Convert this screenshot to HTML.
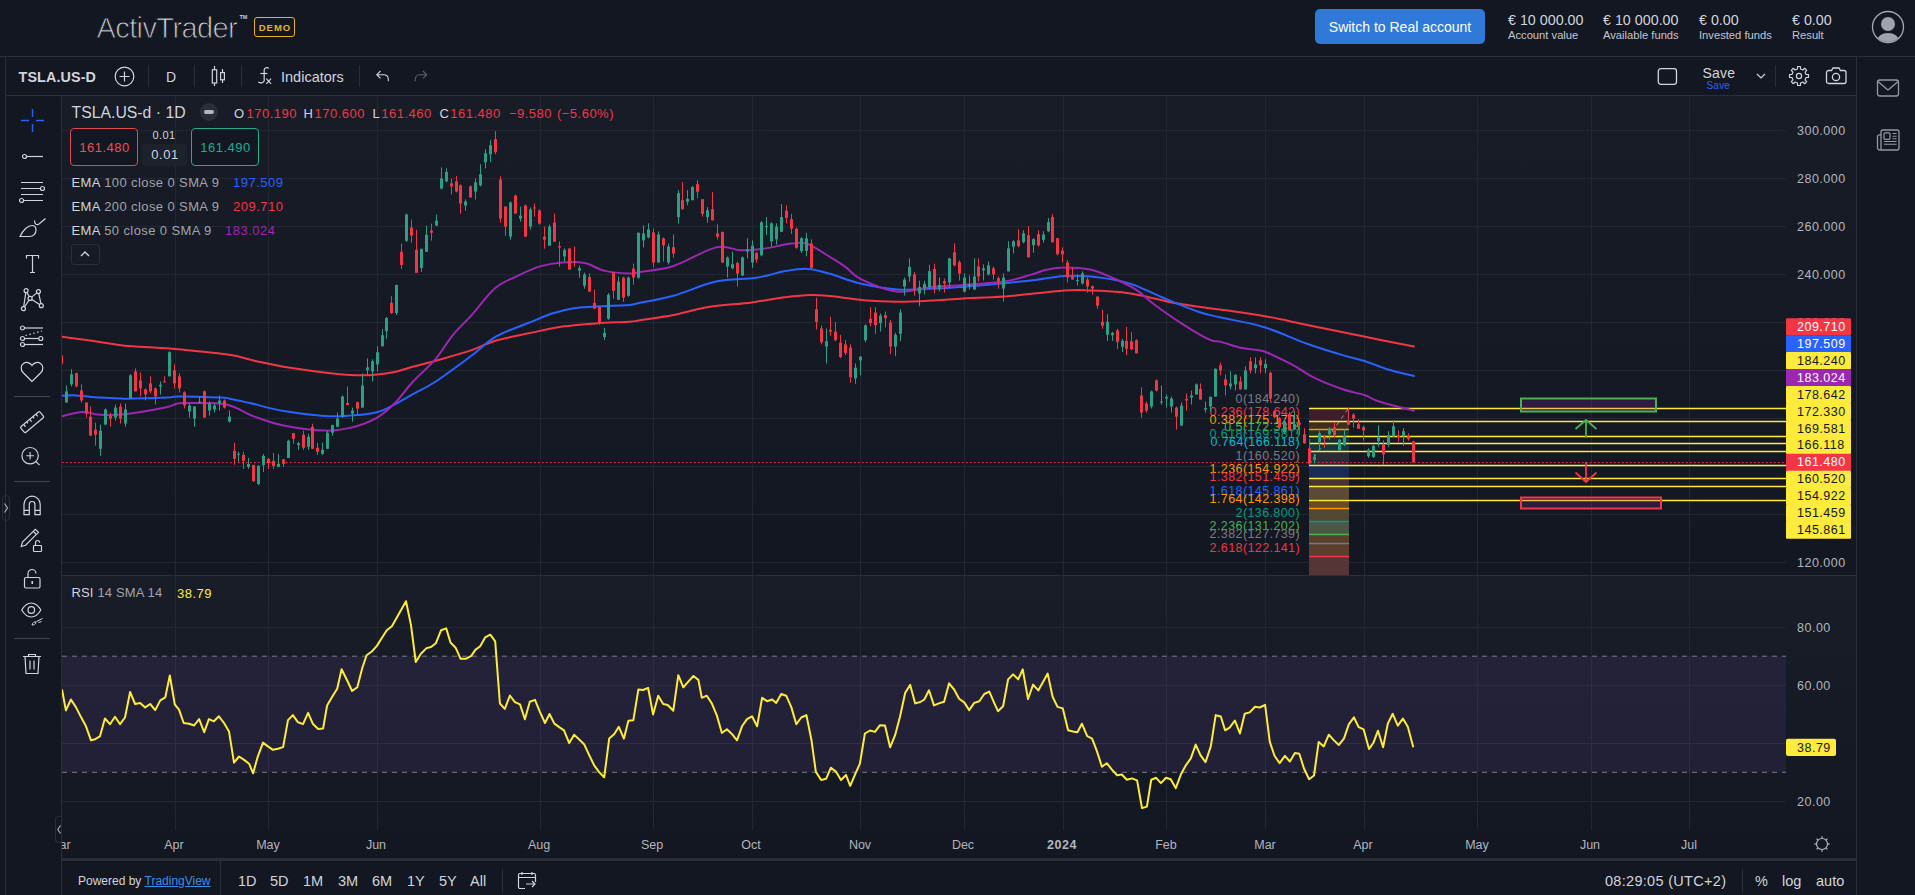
<!DOCTYPE html><html><head><meta charset="utf-8"><style>
html,body{margin:0;padding:0;width:1915px;height:895px;overflow:hidden;background:#131722;font-family:"Liberation Sans", sans-serif;}
div{box-sizing:border-box}
</style></head><body>
<div style="position:absolute;left:0;top:0;width:1915px;height:895px;overflow:hidden">
<div style="position:absolute;left:0;top:56px;width:1915px;height:1px;background:#2a2e39"></div>
<div style="position:absolute;left:5px;top:57px;width:1px;height:838px;background:#2a2e39"></div>
<div style="position:absolute;left:6px;top:95px;width:1850px;height:1px;background:#2a2e39"></div>
<div style="position:absolute;left:6px;top:96px;width:55px;height:799px;background:#131722"></div>
<div style="position:absolute;left:61px;top:96px;width:1px;height:799px;background:#2a2e39"></div>
<svg width="1915" height="895" style="position:absolute;left:0;top:0">
<defs><clipPath id="cm"><rect x="62" y="96" width="1724" height="479"/></clipPath><clipPath id="cr"><rect x="62" y="576" width="1724" height="254"/></clipPath><clipPath id="ct"><rect x="62" y="830" width="1794" height="28"/></clipPath><linearGradient id="g1" x1="0" y1="0" x2="0" y2="1"><stop offset="0" stop-color="#181c27"/><stop offset="1" stop-color="#131722"/></linearGradient><linearGradient id="g2" x1="0" y1="0" x2="0" y2="1"><stop offset="0" stop-color="#191d28"/><stop offset="1" stop-color="#131722"/></linearGradient></defs>
<rect x="62" y="96" width="1794" height="479" fill="url(#g1)"/>
<rect x="62" y="576" width="1794" height="282" fill="url(#g2)"/>
<line x1="175.5" y1="96" x2="175.5" y2="830" stroke="#232733" stroke-width="1"/>
<line x1="268.5" y1="96" x2="268.5" y2="830" stroke="#232733" stroke-width="1"/>
<line x1="377.5" y1="96" x2="377.5" y2="830" stroke="#232733" stroke-width="1"/>
<line x1="540.5" y1="96" x2="540.5" y2="830" stroke="#232733" stroke-width="1"/>
<line x1="653.5" y1="96" x2="653.5" y2="830" stroke="#232733" stroke-width="1"/>
<line x1="752.5" y1="96" x2="752.5" y2="830" stroke="#232733" stroke-width="1"/>
<line x1="860.5" y1="96" x2="860.5" y2="830" stroke="#232733" stroke-width="1"/>
<line x1="964.5" y1="96" x2="964.5" y2="830" stroke="#232733" stroke-width="1"/>
<line x1="1063.5" y1="96" x2="1063.5" y2="830" stroke="#232733" stroke-width="1"/>
<line x1="1166.5" y1="96" x2="1166.5" y2="830" stroke="#232733" stroke-width="1"/>
<line x1="1265.5" y1="96" x2="1265.5" y2="830" stroke="#232733" stroke-width="1"/>
<line x1="1364.5" y1="96" x2="1364.5" y2="830" stroke="#232733" stroke-width="1"/>
<line x1="1477.5" y1="96" x2="1477.5" y2="830" stroke="#232733" stroke-width="1"/>
<line x1="1591.5" y1="96" x2="1591.5" y2="830" stroke="#232733" stroke-width="1"/>
<line x1="1689.5" y1="96" x2="1689.5" y2="830" stroke="#232733" stroke-width="1"/>
<line x1="62" y1="562.5" x2="1786" y2="562.5" stroke="#232733" stroke-width="1"/>
<line x1="62" y1="514.5" x2="1786" y2="514.5" stroke="#232733" stroke-width="1"/>
<line x1="62" y1="466.5" x2="1786" y2="466.5" stroke="#232733" stroke-width="1"/>
<line x1="62" y1="418.5" x2="1786" y2="418.5" stroke="#232733" stroke-width="1"/>
<line x1="62" y1="370.5" x2="1786" y2="370.5" stroke="#232733" stroke-width="1"/>
<line x1="62" y1="322.5" x2="1786" y2="322.5" stroke="#232733" stroke-width="1"/>
<line x1="62" y1="274.5" x2="1786" y2="274.5" stroke="#232733" stroke-width="1"/>
<line x1="62" y1="226.5" x2="1786" y2="226.5" stroke="#232733" stroke-width="1"/>
<line x1="62" y1="178.5" x2="1786" y2="178.5" stroke="#232733" stroke-width="1"/>
<line x1="62" y1="130.5" x2="1786" y2="130.5" stroke="#232733" stroke-width="1"/>
<line x1="62" y1="627.5" x2="1786" y2="627.5" stroke="#232733" stroke-width="1"/>
<line x1="62" y1="685.5" x2="1786" y2="685.5" stroke="#232733" stroke-width="1"/>
<line x1="62" y1="743.5" x2="1786" y2="743.5" stroke="#232733" stroke-width="1"/>
<line x1="62" y1="801.5" x2="1786" y2="801.5" stroke="#232733" stroke-width="1"/>
<rect x="62" y="656.2" width="1724" height="116.1" fill="#7e57c2" fill-opacity="0.12"/>
<line x1="62" y1="656.2" x2="1786" y2="656.2" stroke="#787b86" stroke-width="1" stroke-dasharray="5 5"/>
<line x1="62" y1="772.3" x2="1786" y2="772.3" stroke="#787b86" stroke-width="1" stroke-dasharray="5 5"/>
<g clip-path="url(#cm)">
</g>
<g clip-path="url(#cm)">
<rect x="1309" y="407.7" width="40" height="13.4" fill="#3d1f2b"/>
<rect x="1309" y="421.1" width="40" height="8.3" fill="#3e2f21"/>
<rect x="1309" y="429.4" width="40" height="6.8" fill="#1f3227"/>
<rect x="1309" y="436.3" width="40" height="6.6" fill="#17302f"/>
<rect x="1309" y="442.8" width="40" height="8.3" fill="#143a40"/>
<rect x="1309" y="451.1" width="40" height="13.4" fill="#2a2d37"/>
<rect x="1309" y="464.6" width="40" height="13.4" fill="#1b2a58"/>
<rect x="1309" y="478.0" width="40" height="8.3" fill="#4a3236"/>
<rect x="1309" y="486.3" width="40" height="13.4" fill="#5a4a37"/>
<rect x="1309" y="499.7" width="40" height="8.3" fill="#6a4a25"/>
<rect x="1309" y="508.0" width="40" height="13.4" fill="#514935"/>
<rect x="1309" y="521.5" width="40" height="13.4" fill="#4b5845"/>
<rect x="1309" y="534.9" width="40" height="21.7" fill="#5b3f2d"/>
<rect x="1309" y="556.6" width="40" height="29.1" fill="#553536"/>
<line x1="1309" y1="429.5" x2="1349" y2="429.5" stroke="#ff9800" stroke-width="1.3"/>
<line x1="1309" y1="508.5" x2="1349" y2="508.5" stroke="#ff9800" stroke-width="1.3"/>
<line x1="1309" y1="521.5" x2="1349" y2="521.5" stroke="#089981" stroke-width="1.3"/>
<line x1="1309" y1="534.5" x2="1349" y2="534.5" stroke="#4caf50" stroke-width="1.3"/>
<line x1="1309" y1="543.5" x2="1349" y2="543.5" stroke="#787b86" stroke-width="1.3"/>
<line x1="1309" y1="556.5" x2="1349" y2="556.5" stroke="#f23645" stroke-width="1.3"/>
<line x1="1309" y1="464.6" x2="1349" y2="407.7" stroke="#9598a1" stroke-width="1" stroke-dasharray="4 4"/>
</g>
<g clip-path="url(#cm)">
<line x1="1309" y1="408.5" x2="1786" y2="408.5" stroke="#ffeb3b" stroke-width="1.3"/>
<line x1="1309" y1="421.5" x2="1786" y2="421.5" stroke="#ffeb3b" stroke-width="1.3"/>
<line x1="1309" y1="436.5" x2="1786" y2="436.5" stroke="#ffeb3b" stroke-width="1.3"/>
<line x1="1309" y1="443.5" x2="1786" y2="443.5" stroke="#ffeb3b" stroke-width="1.3"/>
<line x1="1309" y1="451.5" x2="1786" y2="451.5" stroke="#ffeb3b" stroke-width="1.3"/>
<line x1="1309" y1="465.5" x2="1786" y2="465.5" stroke="#ffeb3b" stroke-width="1.3"/>
<line x1="1309" y1="478.5" x2="1786" y2="478.5" stroke="#ffeb3b" stroke-width="1.3"/>
<line x1="1309" y1="486.5" x2="1786" y2="486.5" stroke="#ffeb3b" stroke-width="1.3"/>
<line x1="1309" y1="500.5" x2="1786" y2="500.5" stroke="#ffeb3b" stroke-width="1.3"/>
<text x="1300" y="402.7" fill="#787b86" font-family='"Liberation Sans", sans-serif' font-size="12.5" letter-spacing="0.4" text-anchor="end">0(184.240)</text>
<text x="1300" y="416.1" fill="#f23645" font-family='"Liberation Sans", sans-serif' font-size="12.5" letter-spacing="0.4" text-anchor="end">0.236(178.642)</text>
<text x="1300" y="424.4" fill="#ff9800" font-family='"Liberation Sans", sans-serif' font-size="12.5" letter-spacing="0.4" text-anchor="end">0.382(175.170)</text>
<text x="1300" y="431.3" fill="#4caf50" font-family='"Liberation Sans", sans-serif' font-size="12.5" letter-spacing="0.4" text-anchor="end">0.5(172.330)</text>
<text x="1300" y="437.8" fill="#089981" font-family='"Liberation Sans", sans-serif' font-size="12.5" letter-spacing="0.4" text-anchor="end">0.618(169.581)</text>
<text x="1300" y="446.1" fill="#00bcd4" font-family='"Liberation Sans", sans-serif' font-size="12.5" letter-spacing="0.4" text-anchor="end">0.764(166.118)</text>
<text x="1300" y="459.6" fill="#787b86" font-family='"Liberation Sans", sans-serif' font-size="12.5" letter-spacing="0.4" text-anchor="end">1(160.520)</text>
<text x="1300" y="473.0" fill="#ff9800" font-family='"Liberation Sans", sans-serif' font-size="12.5" letter-spacing="0.4" text-anchor="end">1.236(154.922)</text>
<text x="1300" y="481.3" fill="#f23645" font-family='"Liberation Sans", sans-serif' font-size="12.5" letter-spacing="0.4" text-anchor="end">1.382(151.459)</text>
<text x="1300" y="494.7" fill="#2962ff" font-family='"Liberation Sans", sans-serif' font-size="12.5" letter-spacing="0.4" text-anchor="end">1.618(145.861)</text>
<text x="1300" y="503.0" fill="#ff9800" font-family='"Liberation Sans", sans-serif' font-size="12.5" letter-spacing="0.4" text-anchor="end">1.764(142.398)</text>
<text x="1300" y="516.5" fill="#089981" font-family='"Liberation Sans", sans-serif' font-size="12.5" letter-spacing="0.4" text-anchor="end">2(136.800)</text>
<text x="1300" y="529.9" fill="#4caf50" font-family='"Liberation Sans", sans-serif' font-size="12.5" letter-spacing="0.4" text-anchor="end">2.236(131.202)</text>
<text x="1300" y="538.2" fill="#787b86" font-family='"Liberation Sans", sans-serif' font-size="12.5" letter-spacing="0.4" text-anchor="end">2.382(127.739)</text>
<text x="1300" y="551.6" fill="#f23645" font-family='"Liberation Sans", sans-serif' font-size="12.5" letter-spacing="0.4" text-anchor="end">2.618(122.141)</text>
<rect x="1521" y="398.5" width="135" height="13" fill="#9c27b0" fill-opacity="0.2" stroke="#4caf50" stroke-width="2"/>
<rect x="1521" y="497.5" width="140" height="11" fill="#9c27b0" fill-opacity="0.2" stroke="#f23645" stroke-width="2"/>
<path d="M1586 437.5 V420.5 M1575.5 429 L1586 420 L1596.5 429" fill="none" stroke="#4caf50" stroke-width="1.8"/>
<path d="M1586 462 V481.5 M1575.5 472.5 L1586 482 L1596.5 472.5" fill="none" stroke="#f23645" stroke-width="1.8"/>
<line x1="62" y1="462.5" x2="1786" y2="462.5" stroke="#f23645" stroke-width="1" stroke-dasharray="1.5 2.5"/>
<path d="M60.0 336.5 C63.7 337.0 75.7 338.5 82.4 339.4 C89.1 340.3 93.1 341.1 100.2 342.1 C107.3 343.2 112.9 344.6 124.8 345.7 C136.7 346.8 154.7 347.3 171.8 348.8 C189.0 350.3 213.9 352.6 227.7 354.6 C241.5 356.6 245.2 358.7 254.5 360.7 C263.8 362.7 271.3 364.6 283.6 366.7 C295.9 368.8 317.2 371.6 328.3 373.0 C339.4 374.4 342.6 374.6 350.0 374.9 C357.4 375.2 364.9 375.4 372.4 374.9 C379.8 374.4 388.0 373.4 394.7 372.0 C401.4 370.6 405.2 368.9 412.6 366.8 C420.1 364.8 429.3 362.6 439.4 359.7 C449.5 356.8 463.7 352.8 473.0 349.6 C482.3 346.4 486.0 343.4 495.3 340.7 C504.6 338.0 517.7 335.6 528.9 333.3 C540.1 331.0 551.2 328.2 562.4 326.6 C573.6 325.0 584.7 324.2 595.9 323.4 C607.1 322.6 622.1 322.2 629.5 321.7 C636.9 321.2 632.7 321.4 640.0 320.3 C647.3 319.2 662.3 317.3 673.5 315.1 C684.7 312.9 694.1 309.4 707.1 307.3 C720.1 305.2 738.8 304.1 751.8 302.4 C764.8 300.7 775.6 298.5 785.3 297.3 C795.0 296.1 802.4 295.2 809.9 295.0 C817.4 294.8 821.0 295.2 830.0 296.1 C839.0 297.0 852.4 299.3 863.6 300.2 C874.8 301.1 886.0 301.6 897.1 301.7 C908.2 301.8 918.9 301.2 930.0 300.6 C941.1 300.1 951.2 299.1 963.5 298.4 C975.8 297.7 987.0 297.9 1003.8 296.6 C1020.6 295.3 1049.6 291.5 1064.1 290.5 C1078.6 289.5 1081.7 290.2 1091.0 290.5 C1100.3 290.8 1111.4 291.2 1120.0 292.1 C1128.6 293.0 1133.1 293.8 1142.4 295.7 C1151.7 297.6 1163.0 301.0 1175.9 303.3 C1188.8 305.6 1205.4 307.5 1220.0 309.6 C1234.6 311.7 1249.1 313.3 1263.6 315.9 C1278.1 318.4 1290.2 321.4 1307.1 324.9 C1324.0 328.4 1347.4 333.2 1365.2 336.8 C1383.0 340.4 1405.8 345.0 1413.9 346.6" fill="none" stroke="#f23645" stroke-width="2" stroke-linecap="round"/>
<path d="M60.0 396.0 C62.2 395.9 66.7 395.0 73.4 395.3 C80.1 395.6 91.6 397.0 100.2 397.6 C108.8 398.2 113.6 398.7 124.8 398.7 C136.0 398.7 158.4 398.0 167.3 397.6 C176.2 397.2 169.6 396.4 178.5 396.4 C187.4 396.4 212.4 397.2 221.0 397.6 C229.6 398.0 225.1 397.8 229.9 398.7 C234.7 399.6 241.1 401.1 250.0 403.1 C258.9 405.2 271.3 408.9 283.6 411.0 C295.9 413.1 312.7 415.1 323.8 415.9 C334.9 416.7 341.2 416.2 350.0 415.6 C358.8 415.0 369.4 414.1 376.8 412.2 C384.2 410.3 388.7 407.4 394.7 404.4 C400.7 401.4 405.9 398.0 412.6 394.3 C419.3 390.6 425.3 388.3 435.0 382.0 C444.7 375.7 460.6 363.8 470.7 356.3 C480.8 348.8 485.6 342.5 495.3 336.9 C505.0 331.3 519.6 326.6 528.9 322.8 C538.2 319.0 543.8 316.2 551.2 313.8 C558.7 311.4 566.2 309.4 573.6 308.2 C581.0 307.0 586.6 307.1 595.9 306.5 C605.2 305.9 622.1 305.5 629.5 304.9 C636.9 304.3 632.7 304.3 640.0 302.8 C647.3 301.3 660.8 299.2 673.5 295.7 C686.2 292.2 702.2 284.6 716.0 281.6 C729.8 278.6 744.8 279.6 756.3 277.8 C767.8 276.1 776.7 272.6 785.3 271.1 C793.9 269.6 800.2 268.4 807.7 268.9 C815.2 269.3 821.4 271.4 830.0 273.8 C838.6 276.2 847.9 280.6 859.1 283.2 C870.3 285.8 885.3 288.5 897.1 289.4 C908.9 290.3 918.9 289.2 930.0 288.8 C941.1 288.4 951.2 287.6 963.5 286.7 C975.8 285.8 992.6 284.2 1003.8 283.2 C1015.0 282.2 1020.5 281.7 1030.6 280.5 C1040.6 279.3 1054.0 276.7 1064.1 276.0 C1074.2 275.3 1081.7 275.7 1091.0 276.5 C1100.3 277.3 1112.5 279.4 1120.0 280.9 C1127.5 282.4 1128.2 282.7 1135.7 285.6 C1143.2 288.5 1154.3 294.0 1164.7 298.4 C1175.1 302.8 1189.1 308.6 1198.3 311.8 C1207.5 315.0 1209.1 314.8 1220.0 317.3 C1230.9 319.8 1249.1 322.6 1263.6 327.0 C1278.1 331.4 1293.8 339.0 1307.1 343.7 C1320.4 348.4 1333.8 352.5 1343.5 355.4 C1353.2 358.3 1358.0 358.9 1365.2 361.2 C1372.5 363.5 1378.9 366.7 1387.0 369.2 C1395.1 371.7 1409.4 374.9 1413.9 376.0" fill="none" stroke="#2962ff" stroke-width="2" stroke-linecap="round"/>
<path d="M60.0 416.6 C63.7 415.9 75.7 412.4 82.4 412.1 C89.1 411.8 93.1 414.4 100.2 414.8 C107.3 415.2 114.0 415.5 124.8 414.3 C135.6 413.1 156.5 409.4 165.1 407.6 C173.7 405.9 173.0 404.6 176.3 403.8 C179.7 403.1 177.0 403.0 185.2 403.1 C193.4 403.2 213.8 402.1 225.4 404.3 C237.0 406.6 244.8 413.1 254.5 416.6 C264.2 420.1 272.1 423.2 283.6 425.5 C295.2 427.8 312.7 430.2 323.8 430.6 C334.9 431.0 341.2 430.0 350.0 427.9 C358.8 425.8 369.4 421.9 376.8 417.8 C384.2 413.7 388.7 409.3 394.7 403.3 C400.7 397.3 405.9 389.3 412.6 382.0 C419.3 374.7 428.3 367.5 435.0 359.7 C441.7 351.9 446.9 342.4 452.8 335.1 C458.8 327.8 463.6 323.9 470.7 316.1 C477.8 308.3 487.5 294.8 495.3 288.1 C503.1 281.4 510.3 279.4 517.7 275.8 C525.2 272.2 532.5 268.6 540.0 266.4 C547.5 264.2 554.9 262.9 562.4 262.4 C569.9 261.8 577.6 261.7 584.7 263.1 C591.8 264.5 597.4 269.1 604.9 270.9 C612.4 272.6 623.6 273.4 629.5 273.6 C635.4 273.8 632.7 273.3 640.0 272.0 C647.3 270.7 660.8 270.1 673.5 266.0 C686.2 261.9 704.8 250.0 716.0 247.4 C727.2 244.8 732.8 250.1 740.6 250.3 C748.4 250.5 754.4 249.8 763.0 248.7 C771.6 247.6 784.5 244.4 792.0 243.6 C799.5 242.8 801.4 241.8 807.7 244.0 C814.0 246.2 823.7 253.2 830.0 257.0 C836.3 260.9 840.5 263.4 845.7 267.1 C850.9 270.8 852.7 275.3 861.3 279.4 C869.9 283.5 885.6 290.4 897.1 291.7 C908.6 293.0 918.9 288.3 930.0 287.2 C941.1 286.1 951.2 285.9 963.5 285.0 C975.8 284.1 992.6 283.3 1003.8 281.6 C1015.0 279.9 1023.5 276.9 1030.6 274.9 C1037.7 272.9 1040.7 271.0 1046.3 269.8 C1051.9 268.6 1056.6 267.5 1064.1 267.5 C1071.5 267.5 1082.8 268.0 1091.0 269.8 C1099.2 271.6 1105.8 274.9 1113.3 278.2 C1120.8 281.5 1129.0 285.1 1135.7 289.4 C1142.4 293.7 1145.8 298.2 1153.6 304.0 C1161.4 309.8 1173.3 318.2 1182.6 324.1 C1191.9 330.1 1203.3 336.8 1209.5 339.7 C1215.7 342.6 1214.6 340.2 1220.0 341.6 C1225.4 343.0 1234.5 346.5 1241.8 348.1 C1249.1 349.7 1255.1 348.5 1263.6 351.3 C1272.1 354.1 1284.1 360.4 1292.6 364.8 C1301.1 369.2 1305.9 373.8 1314.4 377.9 C1322.9 382.0 1335.0 386.6 1343.5 389.5 C1352.0 392.4 1359.2 393.2 1365.2 395.3 C1371.2 397.4 1371.7 399.2 1379.8 401.8 C1387.9 404.4 1408.2 409.3 1413.9 410.8" fill="none" stroke="#9c27b0" stroke-width="2" stroke-linecap="round"/>
<rect x="61" y="354.2" width="1" height="11.1" fill="#f23645"/>
<rect x="60" y="355.2" width="3" height="9.1" fill="#f23645"/>
<rect x="66" y="385.4" width="1" height="17.1" fill="#2e9e85"/>
<rect x="65" y="391.4" width="3" height="11.1" fill="#2e9e85"/>
<rect x="71" y="369.3" width="1" height="17.1" fill="#2e9e85"/>
<rect x="70" y="374.3" width="3" height="10.1" fill="#2e9e85"/>
<rect x="76" y="372.7" width="1" height="14.7" fill="#f23645"/>
<rect x="75" y="373.3" width="3" height="13.1" fill="#f23645"/>
<rect x="81" y="384.4" width="1" height="18.1" fill="#f23645"/>
<rect x="80" y="390.4" width="3" height="10.1" fill="#f23645"/>
<rect x="86" y="402.5" width="1" height="15.1" fill="#f23645"/>
<rect x="85" y="402.5" width="3" height="11.1" fill="#f23645"/>
<rect x="90" y="406.5" width="1" height="29.2" fill="#f23645"/>
<rect x="89" y="416.6" width="3" height="19.1" fill="#f23645"/>
<rect x="95" y="422.6" width="1" height="23.1" fill="#f23645"/>
<rect x="94" y="429.7" width="3" height="5.0" fill="#f23645"/>
<rect x="100" y="424.6" width="1" height="31.2" fill="#2e9e85"/>
<rect x="99" y="430.7" width="3" height="18.1" fill="#2e9e85"/>
<rect x="105" y="408.5" width="1" height="16.1" fill="#2e9e85"/>
<rect x="104" y="409.5" width="3" height="15.1" fill="#2e9e85"/>
<rect x="110" y="412.6" width="1" height="14.1" fill="#f23645"/>
<rect x="109" y="415.6" width="3" height="3.0" fill="#f23645"/>
<rect x="115" y="404.5" width="1" height="16.1" fill="#2e9e85"/>
<rect x="114" y="407.5" width="3" height="10.1" fill="#2e9e85"/>
<rect x="120" y="403.5" width="1" height="20.1" fill="#f23645"/>
<rect x="119" y="406.5" width="3" height="12.1" fill="#f23645"/>
<rect x="125" y="403.5" width="1" height="23.1" fill="#2e9e85"/>
<rect x="124" y="409.5" width="3" height="14.1" fill="#2e9e85"/>
<rect x="130" y="374.3" width="1" height="24.1" fill="#2e9e85"/>
<rect x="129" y="375.3" width="3" height="23.1" fill="#2e9e85"/>
<rect x="135" y="368.3" width="1" height="23.1" fill="#f23645"/>
<rect x="134" y="371.3" width="3" height="20.1" fill="#f23645"/>
<rect x="140" y="372.3" width="1" height="24.1" fill="#f23645"/>
<rect x="139" y="380.4" width="3" height="8.0" fill="#f23645"/>
<rect x="145" y="388.4" width="1" height="12.1" fill="#f23645"/>
<rect x="144" y="389.4" width="3" height="5.0" fill="#f23645"/>
<rect x="150" y="376.3" width="1" height="17.1" fill="#f23645"/>
<rect x="149" y="383.4" width="3" height="8.0" fill="#f23645"/>
<rect x="155" y="387.4" width="1" height="17.1" fill="#f23645"/>
<rect x="154" y="388.4" width="3" height="8.0" fill="#f23645"/>
<rect x="160" y="381.4" width="1" height="13.1" fill="#2e9e85"/>
<rect x="159" y="384.8" width="3" height="1.6" fill="#2e9e85"/>
<rect x="164" y="376.3" width="1" height="6.0" fill="#f23645"/>
<rect x="163" y="381.4" width="3" height="1.0" fill="#f23645"/>
<rect x="169" y="351.2" width="1" height="25.2" fill="#2e9e85"/>
<rect x="168" y="352.2" width="3" height="24.1" fill="#2e9e85"/>
<rect x="174" y="364.3" width="1" height="24.1" fill="#f23645"/>
<rect x="173" y="370.3" width="3" height="13.1" fill="#f23645"/>
<rect x="179" y="373.3" width="1" height="19.1" fill="#f23645"/>
<rect x="178" y="376.3" width="3" height="12.1" fill="#f23645"/>
<rect x="184" y="391.4" width="1" height="17.1" fill="#f23645"/>
<rect x="183" y="392.4" width="3" height="13.1" fill="#f23645"/>
<rect x="189" y="403.5" width="1" height="14.1" fill="#2e9e85"/>
<rect x="188" y="405.5" width="3" height="6.0" fill="#2e9e85"/>
<rect x="194" y="406.5" width="1" height="20.1" fill="#2e9e85"/>
<rect x="193" y="406.5" width="3" height="12.1" fill="#2e9e85"/>
<rect x="199" y="396.5" width="1" height="7.0" fill="#2e9e85"/>
<rect x="198" y="401.5" width="3" height="1.0" fill="#2e9e85"/>
<rect x="204" y="390.4" width="1" height="27.2" fill="#f23645"/>
<rect x="203" y="391.4" width="3" height="26.2" fill="#f23645"/>
<rect x="209" y="401.5" width="1" height="14.1" fill="#2e9e85"/>
<rect x="208" y="403.5" width="3" height="7.0" fill="#2e9e85"/>
<rect x="214" y="403.5" width="1" height="9.1" fill="#2e9e85"/>
<rect x="213" y="405.5" width="3" height="4.0" fill="#2e9e85"/>
<rect x="219" y="395.5" width="1" height="15.1" fill="#2e9e85"/>
<rect x="218" y="400.5" width="3" height="3.0" fill="#2e9e85"/>
<rect x="224" y="399.5" width="1" height="9.1" fill="#f23645"/>
<rect x="223" y="400.5" width="3" height="7.0" fill="#f23645"/>
<rect x="229" y="410.5" width="1" height="12.1" fill="#2e9e85"/>
<rect x="228" y="416.6" width="3" height="5.0" fill="#2e9e85"/>
<rect x="234" y="442.7" width="1" height="22.1" fill="#f23645"/>
<rect x="233" y="450.8" width="3" height="8.0" fill="#f23645"/>
<rect x="238" y="451.8" width="1" height="10.1" fill="#2e9e85"/>
<rect x="237" y="453.8" width="3" height="1.0" fill="#2e9e85"/>
<rect x="243" y="451.8" width="1" height="17.1" fill="#f23645"/>
<rect x="242" y="454.8" width="3" height="6.0" fill="#f23645"/>
<rect x="248" y="457.8" width="1" height="11.1" fill="#2e9e85"/>
<rect x="247" y="463.9" width="3" height="3.0" fill="#2e9e85"/>
<rect x="253" y="464.9" width="1" height="17.1" fill="#f23645"/>
<rect x="252" y="464.9" width="3" height="16.1" fill="#f23645"/>
<rect x="258" y="464.9" width="1" height="20.1" fill="#2e9e85"/>
<rect x="257" y="465.9" width="3" height="18.1" fill="#2e9e85"/>
<rect x="263" y="453.9" width="1" height="18.1" fill="#2e9e85"/>
<rect x="262" y="455.9" width="3" height="9.1" fill="#2e9e85"/>
<rect x="268" y="457.9" width="1" height="11.1" fill="#f23645"/>
<rect x="267" y="458.9" width="3" height="4.0" fill="#f23645"/>
<rect x="273" y="452.9" width="1" height="16.1" fill="#f23645"/>
<rect x="272" y="460.9" width="3" height="5.0" fill="#f23645"/>
<rect x="278" y="453.9" width="1" height="13.1" fill="#2e9e85"/>
<rect x="277" y="463.9" width="3" height="3.0" fill="#2e9e85"/>
<rect x="283" y="458.9" width="1" height="8.0" fill="#f23645"/>
<rect x="282" y="459.3" width="3" height="4.6" fill="#f23645"/>
<rect x="288" y="439.8" width="1" height="18.1" fill="#2e9e85"/>
<rect x="287" y="440.8" width="3" height="17.1" fill="#2e9e85"/>
<rect x="293" y="433.1" width="1" height="10.7" fill="#f23645"/>
<rect x="292" y="433.1" width="3" height="5.6" fill="#f23645"/>
<rect x="298" y="441.8" width="1" height="8.0" fill="#2e9e85"/>
<rect x="297" y="443.2" width="3" height="2.0" fill="#2e9e85"/>
<rect x="303" y="430.7" width="1" height="19.1" fill="#f23645"/>
<rect x="302" y="434.7" width="3" height="13.1" fill="#f23645"/>
<rect x="308" y="433.7" width="1" height="16.1" fill="#2e9e85"/>
<rect x="307" y="436.8" width="3" height="10.1" fill="#2e9e85"/>
<rect x="312" y="423.7" width="1" height="25.2" fill="#f23645"/>
<rect x="311" y="426.7" width="3" height="22.1" fill="#f23645"/>
<rect x="317" y="442.8" width="1" height="12.1" fill="#f23645"/>
<rect x="316" y="447.8" width="3" height="4.0" fill="#f23645"/>
<rect x="322" y="442.8" width="1" height="12.1" fill="#2e9e85"/>
<rect x="321" y="449.8" width="3" height="4.0" fill="#2e9e85"/>
<rect x="327" y="430.7" width="1" height="18.1" fill="#2e9e85"/>
<rect x="326" y="432.7" width="3" height="16.1" fill="#2e9e85"/>
<rect x="332" y="424.7" width="1" height="11.1" fill="#2e9e85"/>
<rect x="331" y="425.1" width="3" height="7.6" fill="#2e9e85"/>
<rect x="337" y="412.6" width="1" height="14.1" fill="#2e9e85"/>
<rect x="336" y="418.7" width="3" height="8.0" fill="#2e9e85"/>
<rect x="342" y="395.5" width="1" height="22.1" fill="#2e9e85"/>
<rect x="341" y="396.5" width="3" height="20.1" fill="#2e9e85"/>
<rect x="347" y="386.5" width="1" height="18.5" fill="#f23645"/>
<rect x="346" y="403.0" width="3" height="2.0" fill="#f23645"/>
<rect x="352" y="407.6" width="1" height="14.1" fill="#2e9e85"/>
<rect x="351" y="410.6" width="3" height="3.0" fill="#2e9e85"/>
<rect x="357" y="401.5" width="1" height="14.1" fill="#f23645"/>
<rect x="356" y="402.2" width="3" height="6.4" fill="#f23645"/>
<rect x="362" y="373.4" width="1" height="34.2" fill="#2e9e85"/>
<rect x="361" y="385.5" width="3" height="22.1" fill="#2e9e85"/>
<rect x="367" y="358.3" width="1" height="17.1" fill="#2e9e85"/>
<rect x="366" y="367.3" width="3" height="3.0" fill="#2e9e85"/>
<rect x="372" y="359.3" width="1" height="22.1" fill="#2e9e85"/>
<rect x="371" y="361.3" width="3" height="10.1" fill="#2e9e85"/>
<rect x="377" y="346.2" width="1" height="25.2" fill="#2e9e85"/>
<rect x="376" y="352.3" width="3" height="12.1" fill="#2e9e85"/>
<rect x="382" y="329.1" width="1" height="17.1" fill="#2e9e85"/>
<rect x="381" y="335.2" width="3" height="11.1" fill="#2e9e85"/>
<rect x="386" y="317.0" width="1" height="22.1" fill="#2e9e85"/>
<rect x="385" y="318.0" width="3" height="13.1" fill="#2e9e85"/>
<rect x="391" y="296.1" width="1" height="17.9" fill="#f23645"/>
<rect x="390" y="302.9" width="3" height="10.1" fill="#f23645"/>
<rect x="396" y="284.6" width="1" height="30.4" fill="#2e9e85"/>
<rect x="395" y="285.0" width="3" height="28.0" fill="#2e9e85"/>
<rect x="401" y="243.7" width="1" height="25.2" fill="#f23645"/>
<rect x="400" y="251.8" width="3" height="13.1" fill="#f23645"/>
<rect x="406" y="213.6" width="1" height="28.2" fill="#2e9e85"/>
<rect x="405" y="214.6" width="3" height="26.2" fill="#2e9e85"/>
<rect x="411" y="219.6" width="1" height="23.1" fill="#f23645"/>
<rect x="410" y="227.6" width="3" height="8.0" fill="#f23645"/>
<rect x="416" y="229.7" width="1" height="43.3" fill="#f23645"/>
<rect x="415" y="249.8" width="3" height="23.1" fill="#f23645"/>
<rect x="421" y="248.8" width="1" height="23.1" fill="#2e9e85"/>
<rect x="420" y="248.8" width="3" height="19.1" fill="#2e9e85"/>
<rect x="426" y="225.6" width="1" height="26.2" fill="#2e9e85"/>
<rect x="425" y="234.7" width="3" height="17.1" fill="#2e9e85"/>
<rect x="431" y="223.6" width="1" height="17.1" fill="#f23645"/>
<rect x="430" y="230.7" width="3" height="2.0" fill="#f23645"/>
<rect x="436" y="214.6" width="1" height="11.1" fill="#2e9e85"/>
<rect x="435" y="220.6" width="3" height="5.0" fill="#2e9e85"/>
<rect x="441" y="167.3" width="1" height="22.1" fill="#2e9e85"/>
<rect x="440" y="178.4" width="3" height="10.1" fill="#2e9e85"/>
<rect x="446" y="168.3" width="1" height="14.1" fill="#2e9e85"/>
<rect x="445" y="171.9" width="3" height="9.5" fill="#2e9e85"/>
<rect x="451" y="178.4" width="1" height="16.1" fill="#f23645"/>
<rect x="450" y="183.4" width="3" height="3.0" fill="#f23645"/>
<rect x="456" y="175.9" width="1" height="16.5" fill="#f23645"/>
<rect x="455" y="181.4" width="3" height="10.1" fill="#f23645"/>
<rect x="460" y="184.4" width="1" height="29.2" fill="#f23645"/>
<rect x="459" y="185.4" width="3" height="18.1" fill="#f23645"/>
<rect x="465" y="199.5" width="1" height="11.1" fill="#2e9e85"/>
<rect x="464" y="201.5" width="3" height="4.0" fill="#2e9e85"/>
<rect x="470" y="185.4" width="1" height="12.1" fill="#f23645"/>
<rect x="469" y="186.4" width="3" height="11.1" fill="#f23645"/>
<rect x="475" y="178.4" width="1" height="21.1" fill="#2e9e85"/>
<rect x="474" y="182.4" width="3" height="9.1" fill="#2e9e85"/>
<rect x="480" y="164.3" width="1" height="22.1" fill="#2e9e85"/>
<rect x="479" y="174.3" width="3" height="11.1" fill="#2e9e85"/>
<rect x="485" y="149.2" width="1" height="19.1" fill="#2e9e85"/>
<rect x="484" y="153.2" width="3" height="9.1" fill="#2e9e85"/>
<rect x="490" y="140.1" width="1" height="22.1" fill="#2e9e85"/>
<rect x="489" y="145.2" width="3" height="9.1" fill="#2e9e85"/>
<rect x="495" y="131.1" width="1" height="23.1" fill="#f23645"/>
<rect x="494" y="139.1" width="3" height="13.1" fill="#f23645"/>
<rect x="500" y="176.3" width="1" height="46.3" fill="#f23645"/>
<rect x="499" y="179.4" width="3" height="39.2" fill="#f23645"/>
<rect x="505" y="206.5" width="1" height="29.2" fill="#f23645"/>
<rect x="504" y="206.5" width="3" height="20.1" fill="#f23645"/>
<rect x="510" y="201.5" width="1" height="38.2" fill="#2e9e85"/>
<rect x="509" y="202.5" width="3" height="34.2" fill="#2e9e85"/>
<rect x="515" y="194.8" width="1" height="18.7" fill="#f23645"/>
<rect x="514" y="195.5" width="3" height="18.1" fill="#f23645"/>
<rect x="520" y="206.5" width="1" height="15.1" fill="#2e9e85"/>
<rect x="519" y="215.6" width="3" height="3.0" fill="#2e9e85"/>
<rect x="525" y="204.5" width="1" height="32.2" fill="#f23645"/>
<rect x="524" y="205.5" width="3" height="31.2" fill="#f23645"/>
<rect x="530" y="207.5" width="1" height="22.1" fill="#2e9e85"/>
<rect x="529" y="209.5" width="3" height="17.1" fill="#2e9e85"/>
<rect x="534" y="203.5" width="1" height="13.1" fill="#f23645"/>
<rect x="533" y="207.5" width="3" height="1.0" fill="#f23645"/>
<rect x="539" y="209.5" width="1" height="15.1" fill="#f23645"/>
<rect x="538" y="210.5" width="3" height="13.1" fill="#f23645"/>
<rect x="544" y="226.6" width="1" height="22.1" fill="#f23645"/>
<rect x="543" y="236.7" width="3" height="3.0" fill="#f23645"/>
<rect x="549" y="224.6" width="1" height="21.1" fill="#2e9e85"/>
<rect x="548" y="226.6" width="3" height="19.1" fill="#2e9e85"/>
<rect x="554" y="213.6" width="1" height="28.2" fill="#f23645"/>
<rect x="553" y="222.6" width="3" height="19.1" fill="#f23645"/>
<rect x="559" y="241.4" width="1" height="25.2" fill="#f23645"/>
<rect x="558" y="246.1" width="3" height="1.4" fill="#f23645"/>
<rect x="564" y="248.5" width="1" height="13.1" fill="#2e9e85"/>
<rect x="563" y="250.1" width="3" height="6.4" fill="#2e9e85"/>
<rect x="569" y="248.5" width="1" height="21.1" fill="#f23645"/>
<rect x="568" y="248.5" width="3" height="21.1" fill="#f23645"/>
<rect x="574" y="246.5" width="1" height="20.1" fill="#f23645"/>
<rect x="573" y="261.5" width="3" height="1.0" fill="#f23645"/>
<rect x="579" y="265.6" width="1" height="12.1" fill="#2e9e85"/>
<rect x="578" y="268.2" width="3" height="2.4" fill="#2e9e85"/>
<rect x="584" y="272.6" width="1" height="16.1" fill="#2e9e85"/>
<rect x="583" y="274.6" width="3" height="11.1" fill="#2e9e85"/>
<rect x="589" y="273.6" width="1" height="18.1" fill="#f23645"/>
<rect x="588" y="277.0" width="3" height="14.7" fill="#f23645"/>
<rect x="594" y="289.7" width="1" height="19.1" fill="#f23645"/>
<rect x="593" y="302.8" width="3" height="6.0" fill="#f23645"/>
<rect x="599" y="305.8" width="1" height="19.1" fill="#f23645"/>
<rect x="598" y="306.8" width="3" height="17.1" fill="#f23645"/>
<rect x="604" y="327.9" width="1" height="12.1" fill="#2e9e85"/>
<rect x="603" y="333.0" width="3" height="4.0" fill="#2e9e85"/>
<rect x="608" y="293.1" width="1" height="26.8" fill="#2e9e85"/>
<rect x="607" y="294.7" width="3" height="24.1" fill="#2e9e85"/>
<rect x="613" y="272.6" width="1" height="26.2" fill="#f23645"/>
<rect x="612" y="272.6" width="3" height="18.1" fill="#f23645"/>
<rect x="618" y="276.6" width="1" height="23.1" fill="#2e9e85"/>
<rect x="617" y="281.7" width="3" height="18.1" fill="#2e9e85"/>
<rect x="623" y="276.6" width="1" height="25.2" fill="#f23645"/>
<rect x="622" y="277.6" width="3" height="20.1" fill="#f23645"/>
<rect x="628" y="276.6" width="1" height="20.1" fill="#2e9e85"/>
<rect x="627" y="277.6" width="3" height="18.1" fill="#2e9e85"/>
<rect x="633" y="263.6" width="1" height="21.1" fill="#f23645"/>
<rect x="632" y="268.6" width="3" height="9.1" fill="#f23645"/>
<rect x="638" y="232.4" width="1" height="46.3" fill="#2e9e85"/>
<rect x="637" y="232.8" width="3" height="44.9" fill="#2e9e85"/>
<rect x="643" y="225.3" width="1" height="22.1" fill="#2e9e85"/>
<rect x="642" y="233.4" width="3" height="7.0" fill="#2e9e85"/>
<rect x="648" y="223.3" width="1" height="15.1" fill="#2e9e85"/>
<rect x="647" y="229.4" width="3" height="8.0" fill="#2e9e85"/>
<rect x="653" y="228.4" width="1" height="39.2" fill="#f23645"/>
<rect x="652" y="232.4" width="3" height="30.2" fill="#f23645"/>
<rect x="658" y="231.4" width="1" height="31.2" fill="#2e9e85"/>
<rect x="657" y="234.4" width="3" height="28.2" fill="#2e9e85"/>
<rect x="663" y="237.4" width="1" height="24.1" fill="#f23645"/>
<rect x="662" y="238.4" width="3" height="7.0" fill="#f23645"/>
<rect x="668" y="243.4" width="1" height="21.1" fill="#2e9e85"/>
<rect x="667" y="246.5" width="3" height="16.1" fill="#2e9e85"/>
<rect x="673" y="234.4" width="1" height="23.1" fill="#f23645"/>
<rect x="672" y="247.1" width="3" height="6.4" fill="#f23645"/>
<rect x="678" y="190.1" width="1" height="33.2" fill="#2e9e85"/>
<rect x="677" y="193.1" width="3" height="24.1" fill="#2e9e85"/>
<rect x="682" y="182.1" width="1" height="27.2" fill="#f23645"/>
<rect x="681" y="200.2" width="3" height="9.1" fill="#f23645"/>
<rect x="687" y="190.1" width="1" height="15.1" fill="#2e9e85"/>
<rect x="686" y="198.8" width="3" height="3.0" fill="#2e9e85"/>
<rect x="692" y="186.1" width="1" height="14.1" fill="#2e9e85"/>
<rect x="691" y="187.1" width="3" height="13.1" fill="#2e9e85"/>
<rect x="697" y="180.1" width="1" height="18.1" fill="#f23645"/>
<rect x="696" y="184.1" width="3" height="7.6" fill="#f23645"/>
<rect x="702" y="199.2" width="1" height="17.5" fill="#f23645"/>
<rect x="701" y="199.2" width="3" height="14.7" fill="#f23645"/>
<rect x="707" y="207.2" width="1" height="15.5" fill="#2e9e85"/>
<rect x="706" y="210.2" width="3" height="7.0" fill="#2e9e85"/>
<rect x="712" y="192.1" width="1" height="28.2" fill="#f23645"/>
<rect x="711" y="209.2" width="3" height="11.1" fill="#f23645"/>
<rect x="717" y="224.3" width="1" height="15.1" fill="#f23645"/>
<rect x="716" y="233.4" width="3" height="3.4" fill="#f23645"/>
<rect x="722" y="231.4" width="1" height="31.2" fill="#f23645"/>
<rect x="721" y="232.0" width="3" height="30.6" fill="#f23645"/>
<rect x="727" y="256.5" width="1" height="21.1" fill="#2e9e85"/>
<rect x="726" y="257.5" width="3" height="9.1" fill="#2e9e85"/>
<rect x="732" y="251.5" width="1" height="18.1" fill="#2e9e85"/>
<rect x="731" y="264.2" width="3" height="4.0" fill="#2e9e85"/>
<rect x="737" y="261.5" width="1" height="25.2" fill="#f23645"/>
<rect x="736" y="263.0" width="3" height="10.7" fill="#f23645"/>
<rect x="742" y="256.5" width="1" height="19.1" fill="#2e9e85"/>
<rect x="741" y="257.5" width="3" height="18.1" fill="#2e9e85"/>
<rect x="747" y="238.2" width="1" height="20.2" fill="#2e9e85"/>
<rect x="746" y="249.5" width="3" height="2.1" fill="#2e9e85"/>
<rect x="752" y="240.3" width="1" height="27.6" fill="#2e9e85"/>
<rect x="751" y="245.6" width="3" height="17.0" fill="#2e9e85"/>
<rect x="756" y="252.0" width="1" height="10.6" fill="#f23645"/>
<rect x="755" y="253.1" width="3" height="6.4" fill="#f23645"/>
<rect x="761" y="221.2" width="1" height="35.0" fill="#2e9e85"/>
<rect x="760" y="222.3" width="3" height="32.9" fill="#2e9e85"/>
<rect x="766" y="217.0" width="1" height="18.0" fill="#2e9e85"/>
<rect x="765" y="225.9" width="3" height="1.3" fill="#2e9e85"/>
<rect x="771" y="222.3" width="1" height="24.4" fill="#2e9e85"/>
<rect x="770" y="223.4" width="3" height="18.0" fill="#2e9e85"/>
<rect x="776" y="223.4" width="1" height="21.2" fill="#2e9e85"/>
<rect x="775" y="226.5" width="3" height="12.7" fill="#2e9e85"/>
<rect x="781" y="204.2" width="1" height="27.6" fill="#2e9e85"/>
<rect x="780" y="217.0" width="3" height="14.9" fill="#2e9e85"/>
<rect x="786" y="205.3" width="1" height="18.0" fill="#f23645"/>
<rect x="785" y="210.6" width="3" height="7.4" fill="#f23645"/>
<rect x="791" y="213.8" width="1" height="20.2" fill="#f23645"/>
<rect x="790" y="219.1" width="3" height="9.6" fill="#f23645"/>
<rect x="796" y="227.6" width="1" height="21.2" fill="#f23645"/>
<rect x="795" y="228.7" width="3" height="19.1" fill="#f23645"/>
<rect x="801" y="237.2" width="1" height="15.9" fill="#2e9e85"/>
<rect x="800" y="238.2" width="3" height="12.7" fill="#2e9e85"/>
<rect x="806" y="232.9" width="1" height="23.4" fill="#2e9e85"/>
<rect x="805" y="238.2" width="3" height="12.7" fill="#2e9e85"/>
<rect x="811" y="239.3" width="1" height="29.7" fill="#f23645"/>
<rect x="810" y="243.5" width="3" height="24.4" fill="#f23645"/>
<rect x="816" y="297.7" width="1" height="31.8" fill="#f23645"/>
<rect x="815" y="309.3" width="3" height="12.7" fill="#f23645"/>
<rect x="821" y="325.3" width="1" height="19.1" fill="#f23645"/>
<rect x="820" y="328.5" width="3" height="13.8" fill="#f23645"/>
<rect x="826" y="328.5" width="1" height="35.0" fill="#2e9e85"/>
<rect x="825" y="341.2" width="3" height="5.3" fill="#2e9e85"/>
<rect x="830" y="316.8" width="1" height="19.1" fill="#f23645"/>
<rect x="829" y="329.9" width="3" height="1.7" fill="#f23645"/>
<rect x="835" y="322.1" width="1" height="19.1" fill="#f23645"/>
<rect x="834" y="331.6" width="3" height="8.5" fill="#f23645"/>
<rect x="840" y="334.8" width="1" height="23.4" fill="#f23645"/>
<rect x="839" y="342.7" width="3" height="14.4" fill="#f23645"/>
<rect x="845" y="340.1" width="1" height="14.9" fill="#f23645"/>
<rect x="844" y="344.4" width="3" height="8.5" fill="#f23645"/>
<rect x="850" y="344.4" width="1" height="38.2" fill="#f23645"/>
<rect x="849" y="347.6" width="3" height="29.7" fill="#f23645"/>
<rect x="855" y="363.5" width="1" height="20.2" fill="#2e9e85"/>
<rect x="854" y="367.7" width="3" height="10.6" fill="#2e9e85"/>
<rect x="860" y="356.1" width="1" height="19.1" fill="#2e9e85"/>
<rect x="859" y="356.7" width="3" height="3.6" fill="#2e9e85"/>
<rect x="865" y="324.2" width="1" height="18.0" fill="#2e9e85"/>
<rect x="864" y="325.3" width="3" height="14.9" fill="#2e9e85"/>
<rect x="870" y="307.2" width="1" height="19.1" fill="#f23645"/>
<rect x="869" y="318.9" width="3" height="4.2" fill="#f23645"/>
<rect x="875" y="307.2" width="1" height="26.5" fill="#f23645"/>
<rect x="874" y="312.5" width="3" height="12.7" fill="#f23645"/>
<rect x="880" y="313.6" width="1" height="18.0" fill="#2e9e85"/>
<rect x="879" y="315.7" width="3" height="7.4" fill="#2e9e85"/>
<rect x="885" y="311.5" width="1" height="15.9" fill="#f23645"/>
<rect x="884" y="315.1" width="3" height="2.8" fill="#f23645"/>
<rect x="890" y="320.0" width="1" height="34.0" fill="#f23645"/>
<rect x="889" y="322.7" width="3" height="23.8" fill="#f23645"/>
<rect x="895" y="332.7" width="1" height="23.4" fill="#2e9e85"/>
<rect x="894" y="334.8" width="3" height="11.7" fill="#2e9e85"/>
<rect x="900" y="309.3" width="1" height="31.8" fill="#2e9e85"/>
<rect x="899" y="312.5" width="3" height="21.2" fill="#2e9e85"/>
<rect x="904" y="277.5" width="1" height="18.0" fill="#2e9e85"/>
<rect x="903" y="279.6" width="3" height="7.0" fill="#2e9e85"/>
<rect x="909" y="258.4" width="1" height="23.4" fill="#2e9e85"/>
<rect x="908" y="266.9" width="3" height="9.6" fill="#2e9e85"/>
<rect x="914" y="272.2" width="1" height="23.4" fill="#f23645"/>
<rect x="913" y="274.3" width="3" height="15.9" fill="#f23645"/>
<rect x="919" y="280.7" width="1" height="25.5" fill="#2e9e85"/>
<rect x="918" y="287.0" width="3" height="6.4" fill="#2e9e85"/>
<rect x="924" y="280.7" width="1" height="13.8" fill="#2e9e85"/>
<rect x="923" y="283.9" width="3" height="4.2" fill="#2e9e85"/>
<rect x="929" y="264.8" width="1" height="24.4" fill="#2e9e85"/>
<rect x="928" y="271.1" width="3" height="15.9" fill="#2e9e85"/>
<rect x="934" y="263.7" width="1" height="29.7" fill="#f23645"/>
<rect x="933" y="269.0" width="3" height="20.2" fill="#f23645"/>
<rect x="939" y="277.5" width="1" height="13.8" fill="#2e9e85"/>
<rect x="938" y="284.9" width="3" height="4.2" fill="#2e9e85"/>
<rect x="944" y="278.5" width="1" height="14.1" fill="#f23645"/>
<rect x="943" y="281.1" width="3" height="2.4" fill="#f23645"/>
<rect x="949" y="257.9" width="1" height="29.6" fill="#2e9e85"/>
<rect x="948" y="258.4" width="3" height="24.1" fill="#2e9e85"/>
<rect x="954" y="243.3" width="1" height="23.1" fill="#f23645"/>
<rect x="953" y="252.3" width="3" height="13.1" fill="#f23645"/>
<rect x="959" y="260.4" width="1" height="20.1" fill="#f23645"/>
<rect x="958" y="262.0" width="3" height="11.5" fill="#f23645"/>
<rect x="964" y="273.4" width="1" height="19.1" fill="#2e9e85"/>
<rect x="963" y="277.5" width="3" height="14.1" fill="#2e9e85"/>
<rect x="969" y="275.5" width="1" height="14.1" fill="#2e9e85"/>
<rect x="968" y="284.5" width="3" height="2.0" fill="#2e9e85"/>
<rect x="974" y="258.4" width="1" height="31.2" fill="#2e9e85"/>
<rect x="973" y="276.5" width="3" height="13.1" fill="#2e9e85"/>
<rect x="978" y="258.4" width="1" height="23.1" fill="#f23645"/>
<rect x="977" y="266.4" width="3" height="10.1" fill="#f23645"/>
<rect x="983" y="264.4" width="1" height="16.1" fill="#2e9e85"/>
<rect x="982" y="268.4" width="3" height="2.0" fill="#2e9e85"/>
<rect x="988" y="261.4" width="1" height="14.1" fill="#2e9e85"/>
<rect x="987" y="265.4" width="3" height="9.1" fill="#2e9e85"/>
<rect x="993" y="266.4" width="1" height="13.1" fill="#f23645"/>
<rect x="992" y="268.4" width="3" height="6.0" fill="#f23645"/>
<rect x="998" y="276.5" width="1" height="12.1" fill="#f23645"/>
<rect x="997" y="278.1" width="3" height="3.4" fill="#f23645"/>
<rect x="1003" y="273.4" width="1" height="28.2" fill="#2e9e85"/>
<rect x="1002" y="277.5" width="3" height="11.1" fill="#2e9e85"/>
<rect x="1008" y="241.2" width="1" height="30.2" fill="#2e9e85"/>
<rect x="1007" y="248.3" width="3" height="23.1" fill="#2e9e85"/>
<rect x="1013" y="240.2" width="1" height="13.1" fill="#2e9e85"/>
<rect x="1012" y="241.2" width="3" height="5.4" fill="#2e9e85"/>
<rect x="1018" y="229.2" width="1" height="18.1" fill="#f23645"/>
<rect x="1017" y="240.2" width="3" height="6.0" fill="#f23645"/>
<rect x="1023" y="230.2" width="1" height="13.1" fill="#2e9e85"/>
<rect x="1022" y="233.2" width="3" height="9.1" fill="#2e9e85"/>
<rect x="1028" y="226.2" width="1" height="31.2" fill="#f23645"/>
<rect x="1027" y="235.2" width="3" height="22.1" fill="#f23645"/>
<rect x="1033" y="238.2" width="1" height="14.5" fill="#2e9e85"/>
<rect x="1032" y="239.2" width="3" height="6.0" fill="#2e9e85"/>
<rect x="1038" y="230.2" width="1" height="16.5" fill="#f23645"/>
<rect x="1037" y="234.2" width="3" height="11.1" fill="#f23645"/>
<rect x="1043" y="231.2" width="1" height="11.5" fill="#2e9e85"/>
<rect x="1042" y="234.6" width="3" height="5.2" fill="#2e9e85"/>
<rect x="1048" y="218.1" width="1" height="14.1" fill="#2e9e85"/>
<rect x="1047" y="222.1" width="3" height="9.1" fill="#2e9e85"/>
<rect x="1052" y="214.1" width="1" height="28.2" fill="#f23645"/>
<rect x="1051" y="217.1" width="3" height="25.2" fill="#f23645"/>
<rect x="1057" y="238.2" width="1" height="17.1" fill="#f23645"/>
<rect x="1056" y="238.2" width="3" height="16.1" fill="#f23645"/>
<rect x="1062" y="247.3" width="1" height="15.1" fill="#f23645"/>
<rect x="1061" y="250.7" width="3" height="3.6" fill="#f23645"/>
<rect x="1067" y="260.0" width="1" height="22.5" fill="#f23645"/>
<rect x="1066" y="262.4" width="3" height="15.1" fill="#f23645"/>
<rect x="1072" y="267.4" width="1" height="12.1" fill="#f23645"/>
<rect x="1071" y="276.5" width="3" height="3.0" fill="#f23645"/>
<rect x="1077" y="274.4" width="1" height="11.1" fill="#2e9e85"/>
<rect x="1076" y="280.1" width="3" height="1.0" fill="#2e9e85"/>
<rect x="1082" y="271.4" width="1" height="13.1" fill="#2e9e85"/>
<rect x="1081" y="273.4" width="3" height="10.1" fill="#2e9e85"/>
<rect x="1087" y="277.5" width="1" height="15.1" fill="#f23645"/>
<rect x="1086" y="279.5" width="3" height="7.0" fill="#f23645"/>
<rect x="1092" y="285.5" width="1" height="9.1" fill="#f23645"/>
<rect x="1091" y="286.1" width="3" height="2.4" fill="#f23645"/>
<rect x="1097" y="296.2" width="1" height="12.5" fill="#f23645"/>
<rect x="1096" y="296.6" width="3" height="9.1" fill="#f23645"/>
<rect x="1102" y="309.7" width="1" height="19.1" fill="#f23645"/>
<rect x="1101" y="321.7" width="3" height="4.0" fill="#f23645"/>
<rect x="1107" y="314.3" width="1" height="26.6" fill="#2e9e85"/>
<rect x="1106" y="321.7" width="3" height="13.1" fill="#2e9e85"/>
<rect x="1112" y="331.8" width="1" height="9.1" fill="#2e9e85"/>
<rect x="1111" y="332.8" width="3" height="2.4" fill="#2e9e85"/>
<rect x="1117" y="328.8" width="1" height="20.1" fill="#f23645"/>
<rect x="1116" y="330.4" width="3" height="11.5" fill="#f23645"/>
<rect x="1122" y="338.8" width="1" height="13.1" fill="#2e9e85"/>
<rect x="1121" y="340.8" width="3" height="6.0" fill="#2e9e85"/>
<rect x="1126" y="326.8" width="1" height="28.2" fill="#f23645"/>
<rect x="1125" y="340.8" width="3" height="8.0" fill="#f23645"/>
<rect x="1131" y="332.1" width="1" height="18.1" fill="#f23645"/>
<rect x="1130" y="341.2" width="3" height="8.0" fill="#f23645"/>
<rect x="1136" y="339.2" width="1" height="14.1" fill="#f23645"/>
<rect x="1135" y="340.2" width="3" height="13.1" fill="#f23645"/>
<rect x="1141" y="387.5" width="1" height="30.2" fill="#f23645"/>
<rect x="1140" y="395.5" width="3" height="17.1" fill="#f23645"/>
<rect x="1146" y="401.5" width="1" height="11.1" fill="#f23645"/>
<rect x="1145" y="403.6" width="3" height="7.0" fill="#f23645"/>
<rect x="1151" y="390.5" width="1" height="18.1" fill="#2e9e85"/>
<rect x="1150" y="391.5" width="3" height="15.1" fill="#2e9e85"/>
<rect x="1156" y="379.4" width="1" height="12.1" fill="#f23645"/>
<rect x="1155" y="380.4" width="3" height="10.1" fill="#f23645"/>
<rect x="1161" y="385.5" width="1" height="19.1" fill="#2e9e85"/>
<rect x="1160" y="401.5" width="3" height="1.0" fill="#2e9e85"/>
<rect x="1166" y="394.5" width="1" height="13.1" fill="#2e9e85"/>
<rect x="1165" y="396.9" width="3" height="1.6" fill="#2e9e85"/>
<rect x="1171" y="396.5" width="1" height="16.1" fill="#2e9e85"/>
<rect x="1170" y="398.5" width="3" height="8.0" fill="#2e9e85"/>
<rect x="1176" y="406.6" width="1" height="23.1" fill="#f23645"/>
<rect x="1175" y="407.6" width="3" height="9.1" fill="#f23645"/>
<rect x="1181" y="402.6" width="1" height="23.1" fill="#2e9e85"/>
<rect x="1180" y="405.6" width="3" height="20.1" fill="#2e9e85"/>
<rect x="1186" y="393.5" width="1" height="17.1" fill="#f23645"/>
<rect x="1185" y="398.9" width="3" height="1.6" fill="#f23645"/>
<rect x="1191" y="390.5" width="1" height="14.1" fill="#2e9e85"/>
<rect x="1190" y="395.5" width="3" height="2.0" fill="#2e9e85"/>
<rect x="1196" y="383.4" width="1" height="11.1" fill="#2e9e85"/>
<rect x="1195" y="384.4" width="3" height="10.1" fill="#2e9e85"/>
<rect x="1200" y="383.4" width="1" height="16.1" fill="#f23645"/>
<rect x="1199" y="388.9" width="3" height="10.7" fill="#f23645"/>
<rect x="1205" y="401.5" width="1" height="11.1" fill="#2e9e85"/>
<rect x="1204" y="408.2" width="3" height="1.4" fill="#2e9e85"/>
<rect x="1210" y="396.5" width="1" height="15.1" fill="#2e9e85"/>
<rect x="1209" y="396.9" width="3" height="9.7" fill="#2e9e85"/>
<rect x="1215" y="368.4" width="1" height="28.2" fill="#2e9e85"/>
<rect x="1214" y="368.8" width="3" height="27.8" fill="#2e9e85"/>
<rect x="1220" y="362.3" width="1" height="13.1" fill="#f23645"/>
<rect x="1219" y="365.3" width="3" height="5.0" fill="#f23645"/>
<rect x="1225" y="374.4" width="1" height="21.1" fill="#f23645"/>
<rect x="1224" y="379.4" width="3" height="6.0" fill="#f23645"/>
<rect x="1230" y="371.4" width="1" height="18.1" fill="#2e9e85"/>
<rect x="1229" y="383.4" width="3" height="3.0" fill="#2e9e85"/>
<rect x="1235" y="374.4" width="1" height="16.1" fill="#2e9e85"/>
<rect x="1234" y="374.8" width="3" height="9.7" fill="#2e9e85"/>
<rect x="1240" y="376.4" width="1" height="13.1" fill="#f23645"/>
<rect x="1239" y="381.4" width="3" height="8.0" fill="#f23645"/>
<rect x="1245" y="366.3" width="1" height="23.1" fill="#2e9e85"/>
<rect x="1244" y="370.4" width="3" height="19.1" fill="#2e9e85"/>
<rect x="1250" y="357.3" width="1" height="16.1" fill="#f23645"/>
<rect x="1249" y="361.3" width="3" height="9.1" fill="#f23645"/>
<rect x="1255" y="357.3" width="1" height="16.1" fill="#2e9e85"/>
<rect x="1254" y="364.3" width="3" height="4.0" fill="#2e9e85"/>
<rect x="1260" y="357.3" width="1" height="16.1" fill="#f23645"/>
<rect x="1259" y="360.3" width="3" height="5.0" fill="#f23645"/>
<rect x="1265" y="359.3" width="1" height="14.1" fill="#2e9e85"/>
<rect x="1264" y="363.9" width="3" height="4.4" fill="#2e9e85"/>
<rect x="1270" y="371.4" width="1" height="30.2" fill="#f23645"/>
<rect x="1269" y="372.8" width="3" height="25.8" fill="#f23645"/>
<rect x="1274" y="410.1" width="1" height="8.0" fill="#f23645"/>
<rect x="1273" y="411.1" width="3" height="6.0" fill="#f23645"/>
<rect x="1279" y="417.1" width="1" height="11.1" fill="#f23645"/>
<rect x="1278" y="418.1" width="3" height="9.0" fill="#f23645"/>
<rect x="1284" y="419.1" width="1" height="14.1" fill="#2e9e85"/>
<rect x="1283" y="421.2" width="3" height="11.1" fill="#2e9e85"/>
<rect x="1289" y="412.1" width="1" height="18.6" fill="#f23645"/>
<rect x="1288" y="414.1" width="3" height="16.1" fill="#f23645"/>
<rect x="1294" y="411.1" width="1" height="19.1" fill="#2e9e85"/>
<rect x="1293" y="424.2" width="3" height="5.0" fill="#2e9e85"/>
<rect x="1299" y="420.2" width="1" height="15.1" fill="#f23645"/>
<rect x="1298" y="422.7" width="3" height="2.0" fill="#f23645"/>
<rect x="1304" y="428.2" width="1" height="15.6" fill="#f23645"/>
<rect x="1303" y="434.2" width="3" height="9.0" fill="#f23645"/>
<rect x="1309" y="439.2" width="1" height="25.1" fill="#f23645"/>
<rect x="1308" y="448.3" width="3" height="15.1" fill="#f23645"/>
<rect x="1314" y="453.8" width="1" height="9.5" fill="#2e9e85"/>
<rect x="1313" y="456.8" width="3" height="3.0" fill="#2e9e85"/>
<rect x="1319" y="431.2" width="1" height="20.1" fill="#2e9e85"/>
<rect x="1318" y="433.2" width="3" height="9.0" fill="#2e9e85"/>
<rect x="1324" y="435.2" width="1" height="12.6" fill="#f23645"/>
<rect x="1323" y="436.7" width="3" height="2.0" fill="#f23645"/>
<rect x="1329" y="427.2" width="1" height="12.6" fill="#2e9e85"/>
<rect x="1328" y="428.7" width="3" height="5.5" fill="#2e9e85"/>
<rect x="1334" y="422.2" width="1" height="15.1" fill="#f23645"/>
<rect x="1333" y="427.2" width="3" height="8.0" fill="#f23645"/>
<rect x="1339" y="439.2" width="1" height="11.6" fill="#2e9e85"/>
<rect x="1338" y="439.7" width="3" height="10.6" fill="#2e9e85"/>
<rect x="1344" y="429.2" width="1" height="16.6" fill="#2e9e85"/>
<rect x="1343" y="436.2" width="3" height="9.0" fill="#2e9e85"/>
<rect x="1348" y="408.1" width="1" height="16.6" fill="#f23645"/>
<rect x="1347" y="421.2" width="3" height="3.5" fill="#f23645"/>
<rect x="1353" y="413.1" width="1" height="14.6" fill="#f23645"/>
<rect x="1352" y="414.6" width="3" height="4.0" fill="#f23645"/>
<rect x="1358" y="419.1" width="1" height="9.5" fill="#f23645"/>
<rect x="1357" y="424.2" width="3" height="4.5" fill="#f23645"/>
<rect x="1363" y="425.7" width="1" height="15.1" fill="#f23645"/>
<rect x="1362" y="427.2" width="3" height="3.0" fill="#f23645"/>
<rect x="1368" y="448.3" width="1" height="9.5" fill="#2e9e85"/>
<rect x="1367" y="449.8" width="3" height="6.5" fill="#2e9e85"/>
<rect x="1373" y="444.8" width="1" height="13.1" fill="#2e9e85"/>
<rect x="1372" y="445.8" width="3" height="11.1" fill="#2e9e85"/>
<rect x="1378" y="425.2" width="1" height="21.6" fill="#2e9e85"/>
<rect x="1377" y="437.2" width="3" height="4.0" fill="#2e9e85"/>
<rect x="1383" y="440.3" width="1" height="24.6" fill="#f23645"/>
<rect x="1382" y="444.3" width="3" height="10.1" fill="#f23645"/>
<rect x="1388" y="431.2" width="1" height="15.6" fill="#2e9e85"/>
<rect x="1387" y="435.2" width="3" height="9.5" fill="#2e9e85"/>
<rect x="1393" y="420.2" width="1" height="16.6" fill="#2e9e85"/>
<rect x="1392" y="426.2" width="3" height="10.1" fill="#2e9e85"/>
<rect x="1398" y="430.2" width="1" height="11.6" fill="#f23645"/>
<rect x="1397" y="435.7" width="3" height="1.5" fill="#f23645"/>
<rect x="1403" y="428.2" width="1" height="17.6" fill="#2e9e85"/>
<rect x="1402" y="431.2" width="3" height="5.0" fill="#2e9e85"/>
<rect x="1408" y="433.2" width="1" height="7.5" fill="#f23645"/>
<rect x="1407" y="436.2" width="3" height="3.0" fill="#f23645"/>
<rect x="1413" y="441.3" width="1" height="21.1" fill="#f23645"/>
<rect x="1412" y="441.3" width="3" height="21.1" fill="#f23645"/>
</g>
<g clip-path="url(#cr)">
<polyline points="62.0,689.5 65.9,710.4 70.9,699.5 75.9,707.1 81.0,717.1 86.0,726.3 91.0,740.3 95.2,739.2 99.9,736.4 104.9,718.5 110.0,724.2 115.0,716.8 120.0,724.2 125.0,717.5 130.1,692.0 135.1,704.0 140.1,702.9 145.2,707.4 150.2,704.0 155.2,710.1 160.3,700.4 165.3,697.3 169.8,675.5 174.8,704.5 179.0,709.6 183.7,723.0 189.1,723.8 194.1,725.5 199.1,719.1 204.2,732.2 208.9,719.1 213.9,721.3 218.9,716.3 224.0,723.0 229.0,731.4 234.0,762.7 239.0,756.5 244.1,759.9 249.1,763.7 253.1,773.3 257.5,757.4 263.0,742.6 267.9,746.4 273.0,749.8 277.9,748.7 283.1,747.1 288.0,720.1 292.9,715.1 298.0,722.3 303.0,724.1 308.1,712.9 313.0,724.1 318.2,729.0 323.1,728.5 327.1,705.5 332.2,696.8 337.2,688.8 341.6,669.3 347.2,680.5 352.1,691.0 357.3,687.2 362.2,668.2 366.6,655.3 371.8,651.5 376.9,645.9 381.8,638.0 386.8,630.2 391.9,626.2 406.0,601.2 410.9,624.6 415.8,662.0 420.9,653.7 426.5,648.1 431.0,647.0 435.9,643.2 441.1,630.2 446.2,628.4 450.5,642.5 455.6,647.7 460.6,658.8 465.7,658.8 471.3,655.9 475.3,649.9 480.2,646.3 485.1,637.4 490.3,634.7 495.2,641.4 499.9,703.5 504.8,708.9 509.9,695.5 514.9,702.2 520.0,704.4 524.9,719.2 529.8,701.7 535.0,699.9 539.9,711.8 545.0,723.0 549.5,714.0 554.4,723.6 559.6,727.4 564.0,730.3 569.2,743.1 574.1,734.8 579.0,739.3 584.1,744.2 589.3,755.4 594.2,765.4 599.1,772.1 604.2,777.3 609.2,738.6 614.3,734.1 618.8,726.8 623.9,738.6 628.4,720.7 633.3,720.3 638.4,689.4 643.1,690.0 648.1,687.8 653.1,714.6 658.2,695.7 663.2,704.0 667.7,705.0 673.3,710.7 678.3,675.2 683.3,687.3 688.3,681.6 693.4,676.0 698.4,679.9 701.8,697.8 706.8,695.7 711.8,703.4 716.8,715.4 721.9,733.0 726.9,729.2 731.9,733.9 737.0,740.3 742.0,726.3 747.0,719.1 752.0,716.3 757.1,726.3 762.1,697.8 767.1,701.2 772.2,699.5 776.2,702.9 781.2,694.0 786.2,695.7 791.3,707.1 796.3,724.2 801.3,717.5 806.4,715.1 811.4,739.7 815.8,771.6 821.1,780.0 826.1,778.8 830.9,767.7 835.9,771.6 841.0,780.0 846.0,775.0 850.2,785.9 855.2,774.1 859.9,763.7 864.9,733.5 870.0,730.5 875.0,731.9 880.0,725.2 885.0,725.5 890.1,747.3 895.1,735.2 900.1,716.3 905.2,692.8 910.2,684.9 915.2,703.4 920.3,702.0 924.3,699.5 929.0,690.3 934.0,705.4 939.0,703.4 944.1,701.7 949.1,683.3 954.1,689.5 959.1,698.7 964.2,702.4 969.2,710.1 974.2,702.9 979.3,701.2 984.3,694.0 989.3,691.6 994.4,703.4 998.0,711.2 1003.1,706.2 1008.1,679.4 1013.1,674.4 1018.2,679.4 1022.7,669.3 1028.0,699.0 1033.1,684.6 1038.3,690.4 1047.7,673.6 1052.6,696.7 1057.5,706.9 1062.8,708.4 1068.1,730.3 1073.0,731.5 1077.4,732.3 1081.9,723.7 1087.2,736.2 1092.1,738.7 1097.0,751.4 1101.9,766.7 1106.8,763.2 1111.7,769.4 1117.1,775.3 1121.8,774.5 1126.9,779.8 1131.8,778.4 1137.1,780.4 1142.0,808.1 1146.9,806.6 1151.2,779.8 1156.2,777.8 1160.9,783.1 1166.0,777.8 1170.7,779.2 1175.8,788.2 1181.1,773.9 1186.0,765.1 1190.8,758.3 1195.7,744.6 1200.6,755.3 1205.5,762.2 1210.8,746.4 1215.7,715.1 1220.8,716.5 1225.1,730.3 1229.6,727.6 1234.9,720.5 1239.9,733.4 1244.7,713.8 1249.7,712.4 1255.0,706.8 1259.7,707.5 1265.1,704.8 1269.8,741.9 1274.5,755.8 1279.6,763.1 1284.9,755.8 1289.9,761.5 1294.9,753.1 1299.3,753.7 1304.0,768.5 1309.1,779.2 1314.0,775.5 1318.7,741.9 1323.8,746.4 1328.8,734.7 1333.7,740.1 1338.8,745.0 1343.9,738.7 1348.9,724.2 1353.9,717.3 1358.7,727.2 1363.6,729.3 1369.0,749.1 1373.4,742.8 1378.0,730.7 1383.1,747.3 1387.8,723.6 1392.7,713.8 1397.8,725.6 1402.9,718.6 1407.9,726.9 1413.3,747.3" fill="none" stroke="#ffeb3b" stroke-width="2" stroke-linejoin="round"/>
</g>
<rect x="62" y="575" width="1794" height="1" fill="#2a2e39"/>
<rect x="1856" y="56" width="1" height="839" fill="#2a2e39"/>
<rect x="62" y="858" width="1794" height="3" fill="#2a2e39"/>
<text x="1797" y="134.5" fill="#b2b5be" font-family='"Liberation Sans", sans-serif' font-size="12.5" text-anchor="start" font-weight="normal" letter-spacing="0.5">300.000</text>
<text x="1797" y="182.5" fill="#b2b5be" font-family='"Liberation Sans", sans-serif' font-size="12.5" text-anchor="start" font-weight="normal" letter-spacing="0.5">280.000</text>
<text x="1797" y="230.5" fill="#b2b5be" font-family='"Liberation Sans", sans-serif' font-size="12.5" text-anchor="start" font-weight="normal" letter-spacing="0.5">260.000</text>
<text x="1797" y="278.5" fill="#b2b5be" font-family='"Liberation Sans", sans-serif' font-size="12.5" text-anchor="start" font-weight="normal" letter-spacing="0.5">240.000</text>
<text x="1797" y="326.5" fill="#b2b5be" font-family='"Liberation Sans", sans-serif' font-size="12.5" text-anchor="start" font-weight="normal" letter-spacing="0.5">220.000</text>
<text x="1797" y="566.5" fill="#b2b5be" font-family='"Liberation Sans", sans-serif' font-size="12.5" text-anchor="start" font-weight="normal" letter-spacing="0.5">120.000</text>
<text x="1797" y="631.5" fill="#b2b5be" font-family='"Liberation Sans", sans-serif' font-size="12.5" text-anchor="start" font-weight="normal" letter-spacing="0.5">80.00</text>
<text x="1797" y="689.5" fill="#b2b5be" font-family='"Liberation Sans", sans-serif' font-size="12.5" text-anchor="start" font-weight="normal" letter-spacing="0.5">60.00</text>
<text x="1797" y="805.5" fill="#b2b5be" font-family='"Liberation Sans", sans-serif' font-size="12.5" text-anchor="start" font-weight="normal" letter-spacing="0.5">20.00</text>
<rect x="1786" y="318.20" width="65" height="17.25" fill="#f23645" rx="1"/>
<text x="1797" y="330.8" fill="#fff" font-family='"Liberation Sans", sans-serif' font-size="12.5" text-anchor="start" font-weight="normal" letter-spacing="0.5">209.710</text>
<rect x="1786" y="335.15" width="65" height="17.25" fill="#2962ff" rx="1"/>
<text x="1797" y="347.8" fill="#fff" font-family='"Liberation Sans", sans-serif' font-size="12.5" text-anchor="start" font-weight="normal" letter-spacing="0.5">197.509</text>
<rect x="1786" y="352.10" width="65" height="17.25" fill="#ffeb3b" rx="1"/>
<text x="1797" y="364.7" fill="#131722" font-family='"Liberation Sans", sans-serif' font-size="12.5" text-anchor="start" font-weight="normal" letter-spacing="0.5">184.240</text>
<rect x="1786" y="369.05" width="65" height="17.25" fill="#9c27b0" rx="1"/>
<text x="1797" y="381.6" fill="#fff" font-family='"Liberation Sans", sans-serif' font-size="12.5" text-anchor="start" font-weight="normal" letter-spacing="0.5">183.024</text>
<rect x="1786" y="386.00" width="65" height="17.25" fill="#ffeb3b" rx="1"/>
<text x="1797" y="398.6" fill="#131722" font-family='"Liberation Sans", sans-serif' font-size="12.5" text-anchor="start" font-weight="normal" letter-spacing="0.5">178.642</text>
<rect x="1786" y="402.95" width="65" height="17.25" fill="#ffeb3b" rx="1"/>
<text x="1797" y="415.5" fill="#131722" font-family='"Liberation Sans", sans-serif' font-size="12.5" text-anchor="start" font-weight="normal" letter-spacing="0.5">172.330</text>
<rect x="1786" y="419.90" width="65" height="17.25" fill="#ffeb3b" rx="1"/>
<text x="1797" y="432.5" fill="#131722" font-family='"Liberation Sans", sans-serif' font-size="12.5" text-anchor="start" font-weight="normal" letter-spacing="0.5">169.581</text>
<rect x="1786" y="436.85" width="65" height="17.25" fill="#ffeb3b" rx="1"/>
<text x="1797" y="449.4" fill="#131722" font-family='"Liberation Sans", sans-serif' font-size="12.5" text-anchor="start" font-weight="normal" letter-spacing="0.5">166.118</text>
<rect x="1786" y="453.80" width="65" height="17.25" fill="#f23645" rx="1"/>
<text x="1797" y="466.4" fill="#fff" font-family='"Liberation Sans", sans-serif' font-size="12.5" text-anchor="start" font-weight="normal" letter-spacing="0.5">161.480</text>
<rect x="1786" y="470.75" width="65" height="17.25" fill="#ffeb3b" rx="1"/>
<text x="1797" y="483.3" fill="#131722" font-family='"Liberation Sans", sans-serif' font-size="12.5" text-anchor="start" font-weight="normal" letter-spacing="0.5">160.520</text>
<rect x="1786" y="487.70" width="65" height="17.25" fill="#ffeb3b" rx="1"/>
<text x="1797" y="500.3" fill="#131722" font-family='"Liberation Sans", sans-serif' font-size="12.5" text-anchor="start" font-weight="normal" letter-spacing="0.5">154.922</text>
<rect x="1786" y="504.65" width="65" height="17.25" fill="#ffeb3b" rx="1"/>
<text x="1797" y="517.2" fill="#131722" font-family='"Liberation Sans", sans-serif' font-size="12.5" text-anchor="start" font-weight="normal" letter-spacing="0.5">151.459</text>
<rect x="1786" y="521.60" width="65" height="17.25" fill="#ffeb3b" rx="1"/>
<text x="1797" y="534.2" fill="#131722" font-family='"Liberation Sans", sans-serif' font-size="12.5" text-anchor="start" font-weight="normal" letter-spacing="0.5">145.861</text>
<rect x="1786" y="738.7" width="50" height="17.4" fill="#ffeb3b" rx="2"/>
<text x="1797" y="751.8" fill="#131722" font-family='"Liberation Sans", sans-serif' font-size="12.5" text-anchor="start" font-weight="normal" letter-spacing="0.5">38.79</text>
<g clip-path="url(#ct)">
<text x="65" y="849" fill="#b2b5be" font-family='"Liberation Sans", sans-serif' font-size="12.5" text-anchor="middle" font-weight="normal" letter-spacing="0">ar</text>
<text x="174" y="849" fill="#b2b5be" font-family='"Liberation Sans", sans-serif' font-size="12.5" text-anchor="middle" font-weight="normal" letter-spacing="0">Apr</text>
<text x="268" y="849" fill="#b2b5be" font-family='"Liberation Sans", sans-serif' font-size="12.5" text-anchor="middle" font-weight="normal" letter-spacing="0">May</text>
<text x="376" y="849" fill="#b2b5be" font-family='"Liberation Sans", sans-serif' font-size="12.5" text-anchor="middle" font-weight="normal" letter-spacing="0">Jun</text>
<text x="539" y="849" fill="#b2b5be" font-family='"Liberation Sans", sans-serif' font-size="12.5" text-anchor="middle" font-weight="normal" letter-spacing="0">Aug</text>
<text x="652" y="849" fill="#b2b5be" font-family='"Liberation Sans", sans-serif' font-size="12.5" text-anchor="middle" font-weight="normal" letter-spacing="0">Sep</text>
<text x="751" y="849" fill="#b2b5be" font-family='"Liberation Sans", sans-serif' font-size="12.5" text-anchor="middle" font-weight="normal" letter-spacing="0">Oct</text>
<text x="860" y="849" fill="#b2b5be" font-family='"Liberation Sans", sans-serif' font-size="12.5" text-anchor="middle" font-weight="normal" letter-spacing="0">Nov</text>
<text x="963" y="849" fill="#b2b5be" font-family='"Liberation Sans", sans-serif' font-size="12.5" text-anchor="middle" font-weight="normal" letter-spacing="0">Dec</text>
<text x="1062" y="849" fill="#b2b5be" font-family='"Liberation Sans", sans-serif' font-size="12.5" text-anchor="middle" font-weight="bold" letter-spacing="0.6">2024</text>
<text x="1166" y="849" fill="#b2b5be" font-family='"Liberation Sans", sans-serif' font-size="12.5" text-anchor="middle" font-weight="normal" letter-spacing="0">Feb</text>
<text x="1265" y="849" fill="#b2b5be" font-family='"Liberation Sans", sans-serif' font-size="12.5" text-anchor="middle" font-weight="normal" letter-spacing="0">Mar</text>
<text x="1363" y="849" fill="#b2b5be" font-family='"Liberation Sans", sans-serif' font-size="12.5" text-anchor="middle" font-weight="normal" letter-spacing="0">Apr</text>
<text x="1477" y="849" fill="#b2b5be" font-family='"Liberation Sans", sans-serif' font-size="12.5" text-anchor="middle" font-weight="normal" letter-spacing="0">May</text>
<text x="1590" y="849" fill="#b2b5be" font-family='"Liberation Sans", sans-serif' font-size="12.5" text-anchor="middle" font-weight="normal" letter-spacing="0">Jun</text>
<text x="1689" y="849" fill="#b2b5be" font-family='"Liberation Sans", sans-serif' font-size="12.5" text-anchor="middle" font-weight="normal" letter-spacing="0">Jul</text>
</g>
</svg>
<svg style="position:absolute;left:90px;top:5px" width="160" height="40"><defs><linearGradient id="lg" x1="0" y1="0" x2="0" y2="1"><stop offset="0" stop-color="#e6e9ee"/><stop offset="1" stop-color="#a9aeb8"/></linearGradient></defs><text x="6.5" y="32.6" font-family='"Liberation Sans", sans-serif' font-size="29" letter-spacing="-0.6" fill="url(#lg)" stroke="#131722" stroke-width="0.9">ActivTrader</text></svg>
<div style="position:absolute;left:239.5px;top:14px;font-size:5.5px;line-height:6px;color:#c8ccd4;font-weight:bold">TM</div>
<div style="position:absolute;left:254px;top:17px;width:41px;height:20px;border:1.5px solid #e5b325;border-radius:3px;color:#e5b325;font-size:9.5px;line-height:20px;text-align:center;font-weight:bold;letter-spacing:1px;padding-left:1px">DEMO</div>
<div style="position:absolute;left:1315px;top:9px;width:170px;height:35px;background:#2f7ad8;border-radius:5px;color:#fff;font-size:14px;line-height:37px;letter-spacing:0px;text-align:center">Switch to Real account</div>
<div style="position:absolute;left:1508px;top:13px;font-size:14.3px;line-height:14.3px;color:#d1d4dc;font-weight:normal;white-space:nowrap;">€ 10 000.00</div>
<div style="position:absolute;left:1508px;top:30px;font-size:11.2px;line-height:11.2px;color:#c3c6ce;font-weight:normal;white-space:nowrap;">Account value</div>
<div style="position:absolute;left:1603px;top:13px;font-size:14.3px;line-height:14.3px;color:#d1d4dc;font-weight:normal;white-space:nowrap;">€ 10 000.00</div>
<div style="position:absolute;left:1603px;top:30px;font-size:11.2px;line-height:11.2px;color:#c3c6ce;font-weight:normal;white-space:nowrap;">Available funds</div>
<div style="position:absolute;left:1699px;top:13px;font-size:14.3px;line-height:14.3px;color:#d1d4dc;font-weight:normal;white-space:nowrap;">€ 0.00</div>
<div style="position:absolute;left:1699px;top:30px;font-size:11.2px;line-height:11.2px;color:#c3c6ce;font-weight:normal;white-space:nowrap;">Invested funds</div>
<div style="position:absolute;left:1792px;top:13px;font-size:14.3px;line-height:14.3px;color:#d1d4dc;font-weight:normal;white-space:nowrap;">€ 0.00</div>
<div style="position:absolute;left:1792px;top:30px;font-size:11.2px;line-height:11.2px;color:#c3c6ce;font-weight:normal;white-space:nowrap;">Result</div>
<svg style="position:absolute;left:1871px;top:10px" width="34" height="34" viewBox="0 0 34 34"><defs><clipPath id="av"><circle cx="17" cy="17" r="15"/></clipPath></defs><circle cx="17" cy="17" r="15.5" fill="none" stroke="#a3a8b0" stroke-width="1.3"/><g clip-path="url(#av)" fill="#9da4ad"><circle cx="17" cy="14" r="7"/><ellipse cx="17" cy="31" rx="11" ry="8"/></g></svg>
<div style="position:absolute;left:18.5px;top:69.5px;font-size:14.3px;line-height:14.3px;color:#d1d4dc;font-weight:bold;white-space:nowrap;letter-spacing:0.15px;">TSLA.US-D</div>
<svg style="position:absolute;left:114px;top:66px" width="21" height="21" viewBox="0 0 21 21"><circle cx="10.5" cy="10.5" r="9.3" fill="none" stroke="#d1d4dc" stroke-width="1.2"/><path d="M10.5 5.5V15.5M5.5 10.5H15.5" stroke="#d1d4dc" stroke-width="1.2"/></svg>
<div style="position:absolute;left:148px;top:65px;width:1px;height:22px;background:#2a2e39"></div>
<div style="position:absolute;left:166px;top:70px;font-size:14px;line-height:14px;color:#d1d4dc;font-weight:normal;white-space:nowrap;">D</div>
<div style="position:absolute;left:194px;top:65px;width:1px;height:22px;background:#2a2e39"></div>
<svg style="position:absolute;left:209px;top:65px" width="20" height="22" viewBox="0 0 20 22"><path d="M5.5 1V4.8M5.5 18V21M13.5 4V7.6M13.5 14.8V18" stroke="#d1d4dc" stroke-width="1.2"/><rect x="3.3" y="4.8" width="4.4" height="13.2" fill="none" stroke="#d1d4dc" stroke-width="1.2"/><rect x="11.6" y="7.6" width="3.8" height="7.2" fill="none" stroke="#d1d4dc" stroke-width="1.2"/></svg>
<div style="position:absolute;left:241px;top:65px;width:1px;height:22px;background:#2a2e39"></div>
<svg style="position:absolute;left:255px;top:65px" width="20" height="22" viewBox="0 0 20 22" fill="none" stroke="#d1d4dc" stroke-width="1.2"><path d="M13.7 3.6C13.2 2.4 10 2 9.2 4.5V15.5C9.2 17.7 5.5 18.6 3.3 17"/><path d="M5.4 8.5H12.4"/><path d="M11.3 13.7L16.1 18.9M16.1 13.7L11.3 18.9"/></svg>
<div style="position:absolute;left:281px;top:70px;font-size:14.5px;line-height:14.5px;color:#d1d4dc;font-weight:normal;white-space:nowrap;">Indicators</div>
<div style="position:absolute;left:359px;top:65px;width:1px;height:22px;background:#2a2e39"></div>
<svg style="position:absolute;left:374px;top:68px" width="18" height="16" viewBox="0 0 18 16"><path d="M6.5 3L2.8 6.7L6.5 10.4M2.8 6.7H9.5C12.3 6.7 14.3 8.7 14.3 11.5V13.2" fill="none" stroke="#d1d4dc" stroke-width="1.1"/></svg>
<svg style="position:absolute;left:411px;top:68px" width="18" height="16" viewBox="0 0 18 16"><path d="M12 3L15.7 6.7L12 10.4M15.7 6.7H9C6.2 6.7 4.2 8.7 4.2 11.5V13.2" fill="none" stroke="#5d606b" stroke-width="1.1"/></svg>
<svg style="position:absolute;left:1657px;top:67px" width="22" height="20" viewBox="0 0 22 20"><rect x="1.3" y="1.7" width="18.2" height="15.6" rx="2.5" fill="none" stroke="#d1d4dc" stroke-width="1.3"/></svg>
<div style="position:absolute;left:1702.5px;top:65.5px;font-size:14px;line-height:14px;color:#d1d4dc;font-weight:normal;white-space:nowrap;letter-spacing:0.2px;">Save</div>
<div style="position:absolute;left:1706.5px;top:81px;font-size:10px;line-height:10px;color:#2962ff;font-weight:normal;white-space:nowrap;letter-spacing:0.2px;">Save</div>
<svg style="position:absolute;left:1754px;top:71px" width="14" height="10" viewBox="0 0 14 10"><path d="M3 3L7 7L11 3" fill="none" stroke="#d1d4dc" stroke-width="1.2"/></svg>
<div style="position:absolute;left:1775px;top:65px;width:1px;height:22px;background:#2a2e39"></div>
<svg style="position:absolute;left:1788px;top:65px" width="22" height="22" viewBox="0 0 22 22"><path d="M9.48 3.96 L9.57 1.51 L12.43 1.51 L12.52 3.96 L14.91 4.95 L16.70 3.28 L18.72 5.30 L17.05 7.09 L18.04 9.48 L20.49 9.57 L20.49 12.43 L18.04 12.52 L17.05 14.91 L18.72 16.70 L16.70 18.72 L14.91 17.05 L12.52 18.04 L12.43 20.49 L9.57 20.49 L9.48 18.04 L7.09 17.05 L5.30 18.72 L3.28 16.70 L4.95 14.91 L3.96 12.52 L1.51 12.43 L1.51 9.57 L3.96 9.48 L4.95 7.09 L3.28 5.30 L5.30 3.28 L7.09 4.95Z" fill="none" stroke="#d1d4dc" stroke-width="1.2" stroke-linejoin="round"/><circle cx="11" cy="11" r="2.6" fill="none" stroke="#d1d4dc" stroke-width="1.2"/></svg>
<svg style="position:absolute;left:1824px;top:65px" width="24" height="22" viewBox="0 0 24 22"><path d="M2.5 7.5C2.5 6.4 3.4 5.5 4.5 5.5H7.5L9 3H15L16.5 5.5H20C21.1 5.5 22 6.4 22 7.5V16.5C22 17.6 21.1 18.5 20 18.5H4.5C3.4 18.5 2.5 17.6 2.5 16.5Z" fill="none" stroke="#d1d4dc" stroke-width="1.3"/><circle cx="12" cy="12" r="3.6" fill="none" stroke="#d1d4dc" stroke-width="1.3"/></svg>
<svg style="position:absolute;left:1875px;top:77px" width="26" height="22" viewBox="0 0 26 22"><rect x="2.5" y="3" width="21" height="16" rx="2.2" fill="none" stroke="#9598a1" stroke-width="1.3"/><path d="M3 4.5L12 12.3Q13 13.2 14 12.3L23 4.5" fill="none" stroke="#9598a1" stroke-width="1.3"/></svg>
<svg style="position:absolute;left:1875px;top:127px" width="26" height="26" viewBox="0 0 26 26" fill="none" stroke="#9598a1"><path d="M6 23V5C6 3.9 6.9 3 8 3H22C23.1 3 24 3.9 24 5V21C24 22.1 23.1 23 22 23H4.5C3.4 23 2.5 22.1 2.5 21V9.5C2.5 8.6 3.2 7.8 4 7.8H6" stroke-width="1.3"/><rect x="9" y="5.8" width="6" height="6.5" rx="1" stroke-width="1.2"/><path d="M17.5 6.5H21.5M17.5 9.3H21.5M17.5 11.8H21.5M9 14.5H21.5M9 17.3H21.5" stroke-width="1.1"/></svg>
<svg style="position:absolute;left:19px;top:107px" width="27" height="27" viewBox="0 0 27 27" fill="none" stroke="#2962ff" stroke-width="1.4"><path d="M13.5 2V10M13.5 17V25M2 13.5H10M17 13.5H25"/></svg>
<svg style="position:absolute;left:19px;top:144px" width="26" height="26" viewBox="0 0 26 26" fill="none" stroke="#d1d4dc" stroke-width="1.2"><circle cx="5.5" cy="12.5" r="2"/><path d="M7.5 12.5H24"/></svg>
<svg style="position:absolute;left:19px;top:179px" width="26" height="26" viewBox="0 0 26 26" fill="none" stroke="#d1d4dc" stroke-width="1.2"><path d="M2 3.5H24M2 9.5H21.5M2 15.5H24M4.5 21.5H24"/><circle cx="23.5" cy="9.5" r="2"/><circle cx="2.5" cy="21.5" r="2"/></svg>
<svg style="position:absolute;left:19px;top:216px" width="30" height="26" viewBox="0 0 30 26" fill="none" stroke="#d1d4dc" stroke-width="1.2"><path d="M1 20.5L10.5 20.5C14.5 20.5 17 17.5 17 14C17 11 15 9.5 13 9.5C9 9.5 4 14 1 20.5Z"/><path d="M15.5 4.5C15.5 8 17.5 9.5 20 8L26.5 2.5"/></svg>
<svg style="position:absolute;left:19px;top:251px" width="26" height="26" viewBox="0 0 26 26" fill="none" stroke="#d1d4dc" stroke-width="1.2"><path d="M7 4.5H20M13.5 4.5V21.5M11 21.5H16M7.5 4V7.5M19.5 4V7.5"/></svg>
<svg style="position:absolute;left:19px;top:287px" width="26" height="26" viewBox="0 0 26 26" fill="none" stroke="#d1d4dc" stroke-width="1.2"><circle cx="7.1" cy="3.7" r="2"/><circle cx="19.4" cy="4.6" r="2"/><circle cx="11.1" cy="11.4" r="2"/><circle cx="4.4" cy="21.7" r="2"/><circle cx="22.3" cy="18.7" r="2"/><path d="M6.80 5.68L4.70 19.72M8.02 5.47L10.18 9.63M12.65 10.13L17.85 5.87M19.80 6.56L21.90 16.74M5.49 20.02L10.01 13.08M12.78 12.49L20.62 17.61"/></svg>
<svg style="position:absolute;left:19px;top:323px" width="26" height="26" viewBox="0 0 26 26" fill="none" stroke="#d1d4dc" stroke-width="1.2"><circle cx="3.5" cy="5" r="2"/><path d="M5.5 5H24"/><circle cx="3.5" cy="15.5" r="2"/><circle cx="21.8" cy="15.5" r="2"/><path d="M5.5 15.5H19.8"/><circle cx="3.5" cy="21.5" r="2"/><path d="M5.5 21.5H24"/><path d="M6.5 12.5L23 8" stroke-dasharray="1.5 2.5"/></svg>
<svg style="position:absolute;left:19px;top:359px" width="26" height="26" viewBox="0 0 26 26" fill="none" stroke="#d1d4dc" stroke-width="1.2"><path d="M13 22.5L4 13.5C1.5 11 1.5 6.5 4.5 4.5C7.5 2.5 11 3.5 13 6.5C15 3.5 18.5 2.5 21.5 4.5C24.5 6.5 24.5 11 22 13.5Z"/></svg>
<div style="position:absolute;left:14px;top:396px;width:36px;height:1px;background:#434651"></div>
<svg style="position:absolute;left:19px;top:407px" width="26" height="30" viewBox="0 0 26 30" fill="none" stroke="#d1d4dc" stroke-width="1.2"><g transform="rotate(-40 13 15)"><rect x="0.5" y="11.5" width="25" height="7.5" rx="1.2"/><path d="M5 11.5V14.5M9 11.5V13.5M13 11.5V14.5M17 11.5V13.5M21 11.5V14.5"/></g></svg>
<svg style="position:absolute;left:19px;top:443px" width="26" height="26" viewBox="0 0 26 26" fill="none" stroke="#d1d4dc" stroke-width="1.2"><circle cx="11.1" cy="12.7" r="8.2"/><path d="M17 18.7L20.5 22.2"/><path d="M7.3 12.7H14.9M11.1 8.9V16.5" stroke-width="1.1"/></svg>
<div style="position:absolute;left:14px;top:481px;width:36px;height:1px;background:#434651"></div>
<div style="position:absolute;left:2px;top:495px;width:8px;height:26px;border:1px solid #2a2e39;border-radius:4px"></div>
<svg style="position:absolute;left:2px;top:502px" width="8" height="12" viewBox="0 0 8 12" fill="none" stroke="#b2b5be" stroke-width="1.1"><path d="M2.5 1.5L5.5 6L2.5 10.5"/></svg>
<svg style="position:absolute;left:19px;top:494px" width="26" height="26" viewBox="0 0 26 26" fill="none" stroke="#d1d4dc" stroke-width="1.2"><path d="M5 20.7V10.3A8.1 8.1 0 0 1 21.2 10.3V20.7H15.9V10.3A2.8 2.8 0 0 0 10.3 10.3V20.7Z M5 16.3H10.3M15.9 16.3H21.2"/></svg>
<svg style="position:absolute;left:19px;top:528px" width="26" height="26" viewBox="0 0 26 26" fill="none" stroke="#d1d4dc" stroke-width="1.2"><path d="M2.2 18.5L6.59 17.23L19.46 4.36L16.34 1.24L3.47 14.11Z M17.34 6.48L14.22 3.36"/><rect x="14.5" y="17.5" width="8" height="6" rx="0.8"/><path d="M16.5 17.5V14.8C16.5 13.4 17.4 12.5 18.6 12.5C19.8 12.5 20.7 13.4 20.7 14.8"/></svg>
<svg style="position:absolute;left:19px;top:566px" width="26" height="26" viewBox="0 0 26 26" fill="none" stroke="#d1d4dc" stroke-width="1.2"><rect x="5.5" y="11.5" width="15.5" height="10.5" rx="1.5"/><path d="M9 11.5V7.5C9 5.3 10.8 3.5 13 3.5C15.2 3.5 17 5.3 17 7.5"/><path d="M13.25 15V18" stroke-width="1.6"/></svg>
<svg style="position:absolute;left:19px;top:601px" width="26" height="26" viewBox="0 0 26 26" fill="none" stroke="#d1d4dc" stroke-width="1.2"><path d="M2.7 9C6 3.5 9 2 12.3 2C15.6 2 18.6 3.5 21.9 9C18.6 14.5 15.6 16 12.3 16C9 16 6 14.5 2.7 9Z"/><circle cx="12.3" cy="9" r="3.3"/><path d="M13 24C13.5 21.5 15.5 20.5 17 21C17 23 15 24 13 24Z M17.5 20.5L23.5 17.5M19.5 21.5L22.5 20.5" stroke-width="1"/></svg>
<div style="position:absolute;left:14px;top:638px;width:36px;height:1px;background:#434651"></div>
<svg style="position:absolute;left:19px;top:651px" width="26" height="26" viewBox="0 0 26 26" fill="none" stroke="#d1d4dc" stroke-width="1.2"><path d="M4 5.5H22M9.5 5.5V3.5H16.5V5.5M6 5.5L7 22.5H19L20 5.5M11 9.5V18.5M15 9.5V18.5"/></svg>
<div style="position:absolute;left:55px;top:816px;width:7px;height:27px;border:1px solid #2a2e39;border-right:none;border-radius:4px 0 0 4px"></div>
<svg style="position:absolute;left:56px;top:824px" width="6" height="11" viewBox="0 0 6 11" fill="none" stroke="#b2b5be" stroke-width="1.1"><path d="M4.5 1.5L1.8 5.5L4.5 9.5"/></svg>
<div style="position:absolute;left:71.5px;top:105px;font-size:15.8px;line-height:15.8px;color:#d1d4dc;font-weight:normal;white-space:nowrap;">TSLA.US-d · 1D</div>
<div style="position:absolute;left:200px;top:103px;width:18px;height:18px;border-radius:9px;background:#2a2e39"></div>
<div style="position:absolute;left:204px;top:110px;width:10px;height:4px;border-radius:2px;background:#b2b5be"></div>
<div style="position:absolute;left:234px;top:107px;font-size:13px;line-height:13px;color:#d1d4dc;font-weight:normal;white-space:nowrap;letter-spacing:0.5px;">O</div>
<div style="position:absolute;left:246.5px;top:107px;font-size:13px;line-height:13px;color:#f23645;font-weight:normal;white-space:nowrap;letter-spacing:0.5px;">170.190</div>
<div style="position:absolute;left:303.5px;top:107px;font-size:13px;line-height:13px;color:#d1d4dc;font-weight:normal;white-space:nowrap;letter-spacing:0.5px;">H</div>
<div style="position:absolute;left:314.5px;top:107px;font-size:13px;line-height:13px;color:#f23645;font-weight:normal;white-space:nowrap;letter-spacing:0.5px;">170.600</div>
<div style="position:absolute;left:372.5px;top:107px;font-size:13px;line-height:13px;color:#d1d4dc;font-weight:normal;white-space:nowrap;letter-spacing:0.5px;">L</div>
<div style="position:absolute;left:381.3px;top:107px;font-size:13px;line-height:13px;color:#f23645;font-weight:normal;white-space:nowrap;letter-spacing:0.5px;">161.460</div>
<div style="position:absolute;left:439.5px;top:107px;font-size:13px;line-height:13px;color:#d1d4dc;font-weight:normal;white-space:nowrap;letter-spacing:0.5px;">C</div>
<div style="position:absolute;left:450.3px;top:107px;font-size:13px;line-height:13px;color:#f23645;font-weight:normal;white-space:nowrap;letter-spacing:0.5px;">161.480</div>
<div style="position:absolute;left:508.9px;top:107px;font-size:13px;line-height:13px;color:#f23645;font-weight:normal;white-space:nowrap;letter-spacing:0.5px;">−9.580</div>
<div style="position:absolute;left:556.9px;top:107px;font-size:13px;line-height:13px;color:#f23645;font-weight:normal;white-space:nowrap;letter-spacing:0.5px;">(−5.60%)</div>
<div style="position:absolute;left:70px;top:128px;width:68px;height:38px;border:1px solid #e0484f;border-radius:4px;background:#131722;color:#f0504f;font-size:13px;line-height:37.5px;text-align:center;letter-spacing:0.5px;padding-left:1px">161.480</div>
<div style="position:absolute;left:152.5px;top:129.5px;font-size:11px;line-height:11px;color:#d1d4dc;font-weight:normal;white-space:nowrap;letter-spacing:0.4px;">0.01</div>
<div style="position:absolute;left:142px;top:144px;width:45px;height:22px;border-radius:3px;background:#1e222d;color:#d1d4dc;font-size:13px;line-height:22px;text-align:center;letter-spacing:0.5px;padding-left:1px">0.01</div>
<div style="position:absolute;left:191px;top:128px;width:68px;height:38px;border:1px solid #22ab94;border-radius:4px;background:#131722;color:#22ab94;font-size:13px;line-height:37.5px;text-align:center;letter-spacing:0.5px;padding-left:1px">161.490</div>
<div style="position:absolute;left:71.5px;top:175.5px;font-size:13px;line-height:14px;color:#a0a3ac;white-space:nowrap;letter-spacing:0.4px"><span style="color:#d1d4dc">EMA</span> 100 close 0 SMA 9</div>
<div style="position:absolute;left:233px;top:175.5px;font-size:13px;line-height:13px;color:#2962ff;font-weight:normal;white-space:nowrap;letter-spacing:0.5px;">197.509</div>
<div style="position:absolute;left:71.5px;top:199.5px;font-size:13px;line-height:14px;color:#a0a3ac;white-space:nowrap;letter-spacing:0.4px"><span style="color:#d1d4dc">EMA</span> 200 close 0 SMA 9</div>
<div style="position:absolute;left:233px;top:199.5px;font-size:13px;line-height:13px;color:#f23645;font-weight:normal;white-space:nowrap;letter-spacing:0.5px;">209.710</div>
<div style="position:absolute;left:71.5px;top:223.5px;font-size:13px;line-height:14px;color:#a0a3ac;white-space:nowrap;letter-spacing:0.4px"><span style="color:#d1d4dc">EMA</span> 50 close 0 SMA 9</div>
<div style="position:absolute;left:225px;top:223.5px;font-size:13px;line-height:13px;color:#9c27b0;font-weight:normal;white-space:nowrap;letter-spacing:0.5px;">183.024</div>
<div style="position:absolute;left:71px;top:244px;width:29px;height:21px;border:1px solid #2a2e39;border-radius:3px"></div>
<svg style="position:absolute;left:79px;top:249px" width="12" height="10" viewBox="0 0 12 10" fill="none" stroke="#d1d4dc" stroke-width="1.4"><path d="M2 7L6 3L10 7"/></svg>
<div style="position:absolute;left:71.5px;top:586px;font-size:13px;line-height:14px;color:#a0a3ac;white-space:nowrap;letter-spacing:0.15px"><span style="color:#d1d4dc">RSI</span> 14 SMA 14</div>
<div style="position:absolute;left:177px;top:587px;font-size:13px;line-height:13px;color:#ffeb3b;font-weight:normal;white-space:nowrap;letter-spacing:0.5px;">38.79</div>
<div style="position:absolute;left:78px;top:874px;font-size:12px;line-height:14px;color:#d1d4dc;white-space:nowrap">Powered by <span style="color:#3d8ee8;text-decoration:underline">TradingView</span></div>
<div style="position:absolute;left:220px;top:861px;width:1px;height:34px;background:#2a2e39"></div>
<div style="position:absolute;left:238px;top:874px;font-size:14.5px;line-height:14.5px;color:#d1d4dc;font-weight:normal;white-space:nowrap;">1D</div>
<div style="position:absolute;left:270px;top:874px;font-size:14.5px;line-height:14.5px;color:#d1d4dc;font-weight:normal;white-space:nowrap;">5D</div>
<div style="position:absolute;left:303px;top:874px;font-size:14.5px;line-height:14.5px;color:#d1d4dc;font-weight:normal;white-space:nowrap;">1M</div>
<div style="position:absolute;left:338px;top:874px;font-size:14.5px;line-height:14.5px;color:#d1d4dc;font-weight:normal;white-space:nowrap;">3M</div>
<div style="position:absolute;left:372px;top:874px;font-size:14.5px;line-height:14.5px;color:#d1d4dc;font-weight:normal;white-space:nowrap;">6M</div>
<div style="position:absolute;left:407px;top:874px;font-size:14.5px;line-height:14.5px;color:#d1d4dc;font-weight:normal;white-space:nowrap;">1Y</div>
<div style="position:absolute;left:439px;top:874px;font-size:14.5px;line-height:14.5px;color:#d1d4dc;font-weight:normal;white-space:nowrap;">5Y</div>
<div style="position:absolute;left:470px;top:874px;font-size:14.5px;line-height:14.5px;color:#d1d4dc;font-weight:normal;white-space:nowrap;">All</div>
<div style="position:absolute;left:502px;top:869px;width:1px;height:24px;background:#2a2e39"></div>
<svg style="position:absolute;left:516px;top:870px" width="22" height="20" viewBox="0 0 22 20" fill="none" stroke="#d1d4dc" stroke-width="1.2"><path d="M6 2V5M16 2V5M3 7.5H19M9 18.5H4C3.2 18.5 2.5 17.8 2.5 17V5C2.5 4.2 3.2 3.5 4 3.5H18C18.8 3.5 19.5 4.2 19.5 5V12"/><path d="M10 14H19M16 11L19 14L16 17"/></svg>
<div style="position:absolute;left:1605px;top:874px;font-size:14.5px;line-height:14.5px;color:#d1d4dc;font-weight:normal;white-space:nowrap;letter-spacing:0.3px;">08:29:05 (UTC+2)</div>
<div style="position:absolute;left:1742px;top:869px;width:1px;height:24px;background:#2a2e39"></div>
<div style="position:absolute;left:1755px;top:874px;font-size:14.5px;line-height:14.5px;color:#d1d4dc;font-weight:normal;white-space:nowrap;">%</div>
<div style="position:absolute;left:1782px;top:874px;font-size:14.5px;line-height:14.5px;color:#d1d4dc;font-weight:normal;white-space:nowrap;">log</div>
<div style="position:absolute;left:1816px;top:874px;font-size:14.5px;line-height:14.5px;color:#d1d4dc;font-weight:normal;white-space:nowrap;">auto</div>
<svg style="position:absolute;left:1810.6px;top:833.4px" width="22" height="22" viewBox="0 0 22 22" fill="none" stroke="#b2b5be" stroke-width="1.2"><circle cx="11" cy="11" r="5.5"/><path d="M11 3.3V5.6" transform="rotate(0 11 11)"/><path d="M11 3.3V5.6" transform="rotate(45 11 11)"/><path d="M11 3.3V5.6" transform="rotate(90 11 11)"/><path d="M11 3.3V5.6" transform="rotate(135 11 11)"/><path d="M11 3.3V5.6" transform="rotate(180 11 11)"/><path d="M11 3.3V5.6" transform="rotate(225 11 11)"/><path d="M11 3.3V5.6" transform="rotate(270 11 11)"/><path d="M11 3.3V5.6" transform="rotate(315 11 11)"/></svg>
</div></body></html>
